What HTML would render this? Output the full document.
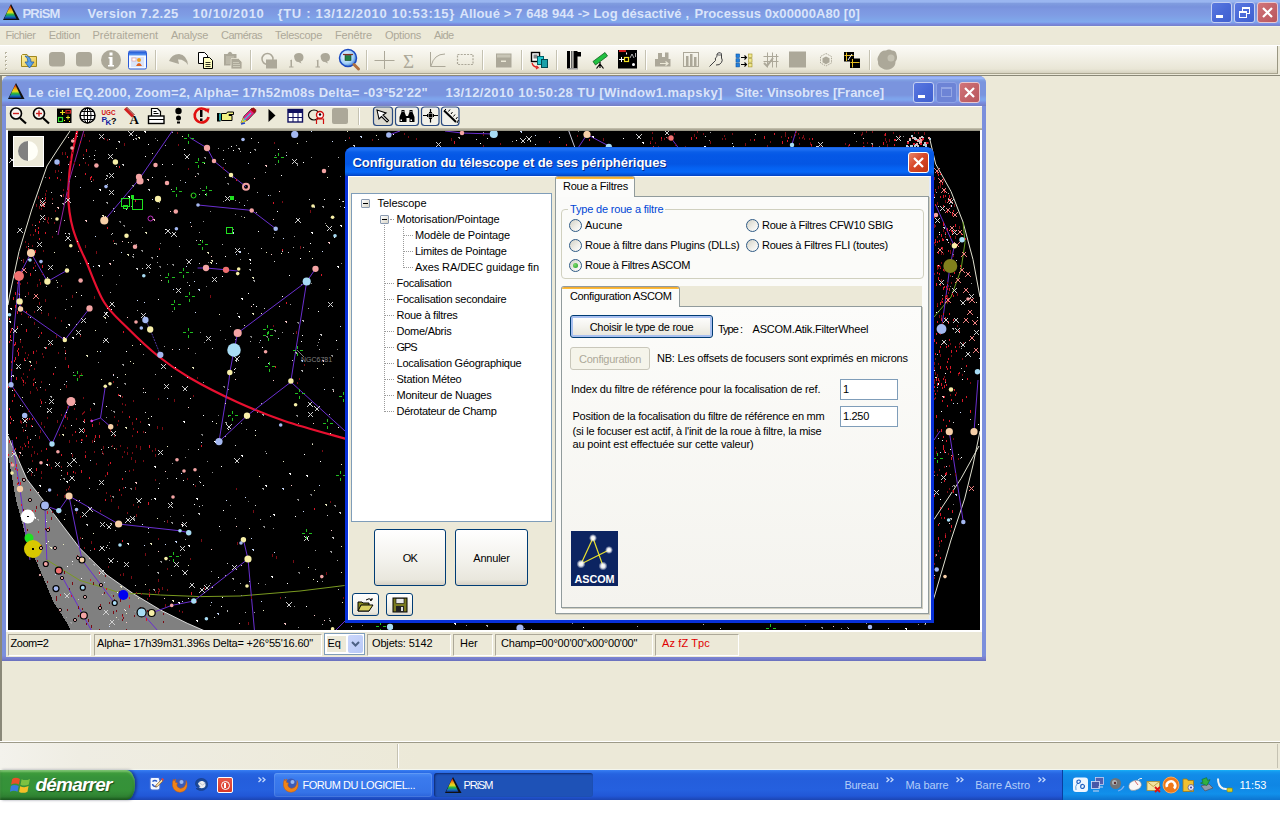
<!DOCTYPE html>
<html lang="fr"><head><meta charset="utf-8"><title>PRiSM</title>
<style>
*{box-sizing:border-box;margin:0;padding:0}
html,body{width:1280px;height:822px;overflow:hidden;background:#fff}
body{position:relative;font-family:"Liberation Sans",sans-serif;font-size:11px;color:#000}
.a{position:absolute}
.t{position:absolute;white-space:nowrap;line-height:14px}
#desk{left:0;top:0;width:1280px;height:800px;background:#ece9d8}
/* main title */
#mt{left:0;top:0;width:1280px;height:26px;background:linear-gradient(#9ab6f0 0,#9ab6f0 2px,#809cdf 3.5px,#7892dc 7px,#7c96e0 9px,#7f9ce4 15px,#7fa4e8 19px,#80a9ee 22px,#7a8ae0 24px,#7580c8 26px)}
.tt{font-weight:bold;font-size:13px;color:#d9e4fa;line-height:16px;white-space:pre;position:absolute}
.cb{position:absolute;width:21px;height:21px;border-radius:3px;border:1px solid #c5d0f2;background:linear-gradient(135deg,#5a78e0,#4a6ad8 50%,#4060cf)}
.cb.x{background:linear-gradient(135deg,#d2757a,#c4646a 50%,#b9565c);border-color:#e8c8d0}
/* menu */
#menu{left:0;top:26px;width:1280px;height:20px;background:#ece9d8;border-top:1px solid #f0f4e6}
#menu span{position:absolute;top:1px;color:#aca899;font-size:11px;line-height:14px;white-space:nowrap}
#tb{left:0;top:46px;width:1278px;height:28px;background:linear-gradient(#fbfaf6,#f3f1e7 40%,#e9e6d6 85%,#d6d2c0);border-bottom:1px solid #a9a590;border-right:1px solid #9a9782}
/* mdi area */
#mdi{left:0;top:75px;width:1280px;height:666px;background:#ece9d8;border-left:2px solid #8a8878;border-top:1px solid #8a8878}
/* child */
#ch{left:2px;top:76px;width:984px;height:585px;background:#7b8fdc;border-radius:7px 7px 0 0}
#cht{left:0;top:0;width:984px;height:30px;border-radius:7px 7px 0 0;background:linear-gradient(#7b8fe0 0,#98b4f8 1px,#98b4f8 2.5px,#80a0e2 4px,#7a94de 6px,#7a94de 19px,#7ea2ea 22px,#7ea6ee 24px,#7a8ee0 26.5px,#7580c8 29.5px)}
#chc{left:4px;top:30px;width:976px;height:551px;background:#ece9d8}
#sky{left:2px;top:25px;width:972px;height:499px;background:#000;overflow:hidden}
.sp{position:absolute;top:528px;height:22px;border:1px solid;border-color:#aca899 #fff #fff #aca899;font-size:11px;line-height:14px;padding:1px 0 0 3px;white-space:nowrap;overflow:hidden}
/* dialog */
#dlg{left:345px;top:147px;width:589px;height:476px;border-radius:8px 8px 0 0;background:#0831d9}
#dlgt{left:0;top:0;width:589px;height:29px;border-radius:8px 8px 0 0;background:linear-gradient(#0a50d8 0,#2272f4 1px,#1a6cf0 3px,#0a5ee8 5px,#0558e6 8px,#0456e4 17px,#0562f2 21px,#0668f8 25px,#0452d8 27.5px,#0340c0 29px)}
#dlgc{left:3px;top:29px;width:583px;height:444px;background:#ece9d8;border-left:1px solid #fff;border-top:1px solid #fff;border-right:2px solid #e2eafa;border-bottom:1px solid #e2eafa}
.btn{position:absolute;border:1px solid #003c74;border-radius:3px;background:linear-gradient(#fff,#f4f3ee 50%,#e9e7dd 90%,#d6d0c5);text-align:center;font-size:11px;white-space:nowrap}
.rad{position:absolute;width:13px;height:13px;border-radius:50%;border:1px solid #2f5a85;background:linear-gradient(135deg,#d2d1c6,#efeee8 55%,#fff)}
.tr{position:absolute;white-space:nowrap;line-height:14px;font-size:11px}
.tbx{position:absolute;width:9px;height:9px;border:1px solid #8a9ab0;border-radius:1px;background:linear-gradient(135deg,#fff,#d8d4c6)}
.tbx:after{content:"";position:absolute;left:1px;top:3px;width:5px;height:1px;background:#000}
.dh{position:absolute;height:0;border-top:1px dotted #9a9a9a}
.dv{position:absolute;width:0;border-left:1px dotted #9a9a9a}
/* bottom */
#sb{left:0;top:743px;width:1280px;height:27px;background:linear-gradient(90deg,#f3f2ec 0,#efede3 80px,#ece9d8 420px);border-bottom:1px solid #f4f6ee}
#tk{left:0;top:770px;width:1280px;height:30px;background:linear-gradient(#3a80f3 0,#2c6fe9 2px,#2663e0 4px,#245edc 9px,#2560df 20px,#2157d7 26px,#1b45b3 30px)}
#st{left:0;top:0;width:135px;height:30px;border-radius:0 9px 9px 0/0 14px 14px 0;background:linear-gradient(#5eac56 0,#3c9b3a 3px,#36923a 8px,#359238 20px,#2f8232 27px,#266b2a 30px);box-shadow:2px 0 3px rgba(0,0,40,.4),inset 0 2px 2px rgba(190,240,170,.35),inset 0 -2px 3px rgba(0,40,0,.3)}
#tray{left:1062px;top:0;width:218px;height:30px;border-left:1px solid #0a3fa0;background:linear-gradient(#19b0f5 0,#1497ee 2px,#118be8 5px,#0f86e4 15px,#1190eb 24px,#0d74cf 30px)}
.tkb{position:absolute;top:3px;height:24px;border-radius:3px;color:#fff;font-size:11px;line-height:14px;white-space:nowrap}
</style></head><body>
<div class="a" id="desk"></div>
<!-- main title bar -->
<div class="a" id="mt">
 <svg class="a" style="left:2px;top:3px" width="18" height="18" viewBox="0 0 18 18"><defs><linearGradient id="pg" x1="0" y1="0" x2="0" y2="1"><stop offset="0" stop-color="#e01010"/><stop offset=".3" stop-color="#f0a010"/><stop offset=".5" stop-color="#e8e020"/><stop offset=".68" stop-color="#20b040"/><stop offset=".85" stop-color="#1070c0"/><stop offset="1" stop-color="#102070"/></linearGradient></defs><path d="M9 1 L17.5 17 L1 17 Z" fill="#111"/><path d="M8.3 2.5 L14.5 16 L2 16 Z" fill="url(#pg)"/></svg>
 <span class="tt" style="letter-spacing:-0.834px;left:22.5px;top:6px">PRiSM</span>
 <span class="tt" style="letter-spacing:0.305px;left:87.5px;top:6px">Version 7.2.25</span>
 <span class="tt" style="letter-spacing:0.692px;left:192.5px;top:6px">10/10/2010</span>
 <span class="tt" style="letter-spacing:0.684px;left:277.5px;top:6px">{TU : 13/12/2010 10:53:15}</span>
 <span class="tt" style="letter-spacing:0.110px;left:459.6px;top:6px">Alloué &gt; 7 648 944 -&gt; Log désactivé ,</span>
 <span class="tt" style="letter-spacing:0.094px;left:694.4px;top:6px">Processus 0x00000A80 [0]</span>
 <div class="cb" style="left:1211px;top:2px"><i class="a" style="left:4px;top:12px;width:7px;height:3px;background:#fff"></i></div>
 <div class="cb" style="left:1234px;top:2px"><i class="a" style="left:7px;top:4px;width:8px;height:7px;border:1px solid #fff;border-top-width:2px"></i><i class="a" style="left:4px;top:8px;width:8px;height:7px;border:1px solid #fff;border-top-width:2px;background:#4d6cd9"></i></div>
 <div class="cb x" style="left:1257px;top:2px"><svg class="a" style="left:0;top:0" width="19" height="19"><path d="M5 5 L14 14 M14 5 L5 14" stroke="#fff" stroke-width="2.2"/></svg></div>
</div>
<!-- menu -->
<div class="a" id="menu">
 <span style="letter-spacing:-0.431px;left:5.5px">Fichier</span><span style="letter-spacing:-0.342px;left:48.75px">Edition</span><span style="letter-spacing:-0.041px;left:92.5px">Prétraitement</span><span style="letter-spacing:-0.306px;left:171px">Analyse</span><span style="letter-spacing:-0.518px;left:221px">Caméras</span><span style="letter-spacing:-0.283px;left:275px">Telescope</span><span style="letter-spacing:-0.132px;left:335px">Fenêtre</span><span style="letter-spacing:-0.275px;left:385px">Options</span><span style="letter-spacing:-0.633px;left:434px">Aide</span>
</div>
<div class="a" style="left:0;top:45px;width:1280px;height:1px;background:#fff"></div>
<div class="a" id="tb"><svg class="a" style="left:0;top:0" width="1278" height="28" viewBox="0 46 1278 28">
<defs><linearGradient id="fg" x1="0" y1="0" x2="1" y2="1"><stop offset="0" stop-color="#fff8b0"/><stop offset="1" stop-color="#e8c040"/></linearGradient><linearGradient id="wg" x1="0" y1="0" x2="0" y2="1"><stop offset="0" stop-color="#1a50d0"/><stop offset="1" stop-color="#60a0f8"/></linearGradient><radialGradient id="mg" cx=".4" cy=".4" r=".7"><stop offset="0" stop-color="#fff"/><stop offset=".6" stop-color="#a0d0f8"/><stop offset="1" stop-color="#2060c8"/></radialGradient></defs>
<rect x="5" y="52" width="2" height="2" fill="#b8b4a0"/><rect x="6" y="53" width="1" height="1" fill="#fff"/>
<rect x="5" y="56" width="2" height="2" fill="#b8b4a0"/><rect x="6" y="57" width="1" height="1" fill="#fff"/>
<rect x="5" y="60" width="2" height="2" fill="#b8b4a0"/><rect x="6" y="61" width="1" height="1" fill="#fff"/>
<rect x="5" y="64" width="2" height="2" fill="#b8b4a0"/><rect x="6" y="65" width="1" height="1" fill="#fff"/>
<rect x="5" y="68" width="2" height="2" fill="#b8b4a0"/><rect x="6" y="69" width="1" height="1" fill="#fff"/>
<path d="M155.5 50v20" stroke="#c5c2b2"/><path d="M156.5 50v20" stroke="#fff"/>
<path d="M250.5 50v20" stroke="#c5c2b2"/><path d="M251.5 50v20" stroke="#fff"/>
<path d="M366.5 50v20" stroke="#c5c2b2"/><path d="M367.5 50v20" stroke="#fff"/>
<path d="M482.5 50v20" stroke="#c5c2b2"/><path d="M483.5 50v20" stroke="#fff"/>
<path d="M521.5 50v20" stroke="#c5c2b2"/><path d="M522.5 50v20" stroke="#fff"/>
<path d="M556.5 50v20" stroke="#c5c2b2"/><path d="M557.5 50v20" stroke="#fff"/>
<path d="M645.5 50v20" stroke="#c5c2b2"/><path d="M646.5 50v20" stroke="#fff"/>
<path d="M869.5 50v20" stroke="#c5c2b2"/><path d="M870.5 50v20" stroke="#fff"/>
<path d="M21.5 55.5 L21.5 66.5 L36.5 66.5 L36.5 56.5 L28.5 56.5 L27 54.5 L22.5 54.5 Z" fill="url(#fg)" stroke="#a08820"/><path d="M25 56 Q31 56 31 62 L34 62 L29.5 68 L25 62 L28 62 Q28 58 25 56Z" fill="#58a0e8" stroke="#2860a8" stroke-width=".8"/>
<rect x="49" y="52" width="16" height="14.5" rx="3.5" fill="#aca899"/><rect x="76" y="52" width="16" height="14.5" rx="3.5" fill="#aca899"/>
<circle cx="111" cy="60" r="10" fill="#aca899"/><rect x="109.5" y="57" width="3" height="9" fill="#fff"/><rect x="109.5" y="52.5" width="3" height="3" fill="#fff"/><rect x="108.5" y="57" width="2" height="1.5" fill="#fff"/><rect x="108" y="65" width="6" height="1.5" fill="#fff"/>
<rect x="128.500" y="51" width="18" height="18" rx="1.5" fill="#f4f8ff" stroke="#2a5ad8"/><rect x="129" y="51.500" width="17" height="4" fill="url(#wg)"/><rect x="131" y="57" width="13" height="10" fill="#d8e4fa"/><circle cx="139" cy="60" r="2" fill="#f0a020"/><path d="M136 66 Q139 60 142 66Z" fill="#e06020"/><rect x="132" y="58" width="4" height="3" fill="#fff" stroke="#e08080" stroke-width=".5"/>
<path d="M169 61 Q172 54 179 54 Q187 55 188 65 Q184 59 178 59.5 L179 64 Z" fill="#aca899"/>
<path d="M198.500 52.500h6l3 3v8h-9z" fill="#fff" stroke="#000"/><path d="M203.500 57.500h6l3 3v8h-9z" fill="#ffffc0" stroke="#000"/><path d="M205.500 62.500h5M205.500 64.500h5M205.500 66.500h5" stroke="#000" stroke-width=".8"/>
<path d="M224 54 h3.500 q2.500 -4.500 5 0 h4 v11.500 h-12.500z" fill="#aca899"/><path d="M231 58.500 h7.500 l3.500 3.500 v7 h-11z" fill="#aca899" stroke="#ece9d8" stroke-width=".8"/><path d="M226 57h8M226 59h4M226 61h4M226 63h4M233 62.500h6M233 64.500h7M233 66.500h7" stroke="#d8d5c6" stroke-width=".7"/>
<circle cx="267.500" cy="59" r="5.500" fill="none" stroke="#aca899" stroke-width="1.500"/><rect x="266" y="59.500" width="11" height="9" fill="#aca899"/>
<path d="M290 60.500 l2 -1 v7 h1.500 v1 h-4.500 v-1 h1.500 v-5z" fill="#aca899"/><path d="M294 56 q1 -3 5 -3 q4 0 4.500 4 q0 4 -3 4.500 l1 2 l-3 -1.500 q-4 0 -4.500 -6z" fill="#aca899"/>
<path d="M316.5 60.500 l2 -1 v7 h1.500 v1 h-4.500 v-1 h1.500 v-5z" fill="#aca899"/><path d="M320.5 56 q1 -3 5 -3 q4 0 4.500 4 q0 4 -3 4.500 l1 2 l-3 -1.500 q-4 0 -4.500 -6z" fill="#aca899"/>
<circle cx="348" cy="58" r="8.500" fill="url(#mg)" stroke="#1848c0" stroke-width="1.500"/><path d="M354 64.500l4.500 4.500" stroke="#b07040" stroke-width="3" stroke-linecap="round"/><rect x="345" y="55.500" width="6" height="5" fill="#208040" stroke="#104020" stroke-width=".6"/><path d="M343 54.500h10" stroke="#803020" stroke-width="1.200"/>
<path d="M374.500 60.500h20M384.500 51v18" stroke="#aca899" stroke-width="1"/>
<text x="403" y="67.500" font-family="Liberation Serif,serif" font-size="19" fill="#aca899">Σ</text>
<path d="M430.500 52v14.500h15" stroke="#aca899" fill="none"/><path d="M431 66 Q434 54 445 54" stroke="#aca899" fill="none"/>
<rect x="457.500" y="54.500" width="15.500" height="10" fill="none" stroke="#aca899" stroke-width="1.200" stroke-dasharray="2 1.200"/>
<rect x="496" y="53.500" width="15.500" height="14" fill="#aca899"/><rect x="497" y="54.500" width="13.500" height="3" fill="#c8c5b6"/><rect x="501" y="60.500" width="5" height="1.500" fill="#ece9d8"/>
<rect x="531.500" y="52.500" width="8" height="9" fill="#fff" stroke="#000" stroke-width="1.400"/><rect x="533.500" y="54.500" width="4" height="4" fill="#888"/><rect x="537.500" y="56.500" width="6" height="8" fill="#20c8d0" stroke="#006068"/><rect x="541.500" y="59.500" width="6" height="8" fill="#18a0a8" stroke="#004850"/><path d="M532 63 q1 4 6 4.500 l-1.500 -1.500 m1.500 1.500 l-2 1.500" stroke="#e02020" fill="none" stroke-width="1.200"/>
<rect x="567" y="51" width="3" height="17.500" fill="#000"/><rect x="571" y="51" width="1.500" height="17.500" fill="#666"/><rect x="573.500" y="51" width="4" height="17.500" fill="#000"/><rect x="577" y="52" width="4" height="4.500" fill="#000"/><rect x="568" y="68" width="10" height="1.500" fill="#999"/>
<path d="M593 61.500 L605 52.500 L607.500 56 L595.500 65 Z" fill="#20c040" stroke="#106020" stroke-width=".8"/><path d="M600 62v6M600 64l-3.500 4.500M600 64l3.500 4.500" stroke="#000" stroke-width="1.200"/>
<rect x="618" y="50" width="19" height="18.500" fill="#000"/><rect x="619" y="50" width="7" height="2" fill="#d02020"/><rect x="624.500" y="57.500" width="4" height="4" fill="none" stroke="#f0e020" stroke-width="1.200"/><path d="M619 59.500h5M621.500 57v5" stroke="#fff"/><path d="M630 58 l2 -4 l2 4 M635.500 53v4" stroke="#ddd" stroke-width=".8" fill="none"/><circle cx="633.500" cy="64.500" r="1.500" fill="#fff"/><path d="M626.500 52.500l.1 2" stroke="#fff"/>
<path d="M655 59 h3 v-6 h4 v4 h3 v-4.500 h3.500 v6.500 h2 v7.500 h-15.500z" fill="#aca899"/><path d="M660 63.500h8m-2.500 -2l2.500 2l-2.500 2" stroke="#ece9d8" fill="none" stroke-width="1.200"/>
<rect x="683.500" y="52.500" width="15" height="14" fill="none" stroke="#aca899"/><rect x="686" y="56" width="2.500" height="10" fill="#aca899"/><rect x="690" y="54" width="2.500" height="12" fill="#aca899"/><rect x="694" y="57" width="2.500" height="9" fill="#aca899"/>
<path d="M709.500 66.500 l6 -6 q-1 -3 1.500 -4 l0 -2.500 q2.500 -2.500 4.500 0 l0 4 q1.500 2 0 4.500 q-2 3 -5.500 2.500" stroke="#404040" fill="none" stroke-width="1"/><ellipse cx="719.500" cy="54" rx="2.200" ry="1.300" fill="#c8c8c8" stroke="#404040" stroke-width=".6"/>
<rect x="736" y="54" width="3.500" height="3.500" fill="#2080e0" stroke="#0850a0" stroke-width=".6"/><rect x="748.500" y="54" width="3.500" height="3.500" fill="#f0e890" stroke="#a09020" stroke-width=".6"/>
<rect x="736" y="58.7" width="3.500" height="3.500" fill="#2080e0" stroke="#0850a0" stroke-width=".6"/><rect x="748.500" y="58.7" width="3.500" height="3.500" fill="#f0e890" stroke="#a09020" stroke-width=".6"/>
<rect x="736" y="63.4" width="3.500" height="3.500" fill="#2080e0" stroke="#0850a0" stroke-width=".6"/><rect x="748.500" y="63.4" width="3.500" height="3.500" fill="#f0e890" stroke="#a09020" stroke-width=".6"/>
<path d="M741 57.500h5.500m-2 -2l2 2l-2 2M741 64.500h5.500m-2 -2l2 2l-2 2" stroke="#000" fill="none" stroke-width="1.100"/>
<path d="M763.500 56.500h15M763.500 61.500h15M767.500 52.500v15M772.500 52.500v15M776.500 54v13.500" stroke="#aca899" fill="none"/><path d="M764 63 l3 3 l6 -8" stroke="#aca899" stroke-width="2" fill="none"/>
<rect x="789" y="51.500" width="17" height="16" fill="#aca899"/>
<path d="M826 53.500 l5.500 3 v6.500 l-5.500 3 l-5.500 -3 v-6.500z" fill="none" stroke="#aca899" stroke-dasharray="1.500 1"/><path d="M826 56.500 l3.500 1.800 v4 l-3.500 2 l-3.500 -2 v-4z" fill="#aca899"/>
<rect x="844" y="52" width="10" height="9.500" fill="#000"/><rect x="850" y="58.500" width="10" height="9.500" fill="#000"/><path d="M846.500 52.500v8.500M844.500 55.500h9M852.500 59v8.500M850.500 62.500h9" stroke="#e8c020" stroke-width="1"/><path d="M848 60 l4 -6" stroke="#fff" stroke-width="1"/>
<path d="M879 55 q2 -5 7 -4.500 q3 -2 6 0 q4 0 4.500 4 q1.500 4 -1 7 q0 5 -4 7 q-5 2.500 -9 0 q-5 -2 -4.500 -7 q-1.500 -3 1 -6.500z" fill="#aca899"/><circle cx="891" cy="58" r="3.500" fill="#c4c1b2"/>
</svg></div>
<div class="a" id="mdi"></div>
<div class="a" id="ch">
 <div class="a" id="cht">
  <svg class="a" style="left:5px;top:6px" width="18" height="18" viewBox="0 0 18 18"><path d="M9 1 L17.5 17 L1 17 Z" fill="#111"/><path d="M8.3 2.5 L14.5 16 L2 16 Z" fill="url(#pg)"/></svg>
  <span class="tt" id="ct1" style="letter-spacing:0.241px;left:26px;top:9px">Le ciel EQ.2000, Zoom=2, Alpha= 17h52m08s Delta= -03°52'22"</span>
  <span class="tt" id="ct2" style="letter-spacing:0.372px;left:443.4px;top:9px">13/12/2010 10:50:28 TU [Window1.mapsky]</span>
  <span class="tt" id="ct3" style="letter-spacing:-0.026px;left:733.3px;top:9px">Site: Vinsobres [France]</span>
  <div class="cb" style="left:911px;top:6px"><i class="a" style="left:4px;top:12px;width:7px;height:3px;background:#fff"></i></div>
  <div class="cb" style="left:934px;top:6px;background:#6d84d6;border-color:#8da2e6"><i class="a" style="left:4px;top:4px;width:11px;height:10px;border:1px solid #93a6e4;border-top-width:2px"></i></div>
  <div class="cb x" style="left:957px;top:6px"><svg class="a" style="left:0;top:0" width="19" height="19"><path d="M5 5 L14 14 M14 5 L5 14" stroke="#fff" stroke-width="2.2"/></svg></div>
 </div>
 <div class="a" style="left:0;top:580px;width:984px;height:5px;background:linear-gradient(#7f8ad8,#757ccb 60%,#6a70bc)"></div>
 <div class="a" id="chc">
  <div class="a" style="left:0;top:0;width:976px;height:1px;background:#fff"></div><div class="a" id="ctb" style="left:0;top:0;width:976px;height:23px"><svg class="a" style="left:0;top:0" width="976" height="23" viewBox="6 106 976 23">
<circle cx="16" cy="113.500" r="5.500" fill="#f8f4f0" stroke="#000" stroke-width="1.600"/><path d="M20 118 l6 5.500" stroke="#000" stroke-width="2.200"/><path d="M13 113.500h6" stroke="#d02020" stroke-width="1.400"/>
<circle cx="39" cy="113.500" r="5.500" fill="#f8f4f0" stroke="#000" stroke-width="1.600"/><path d="M43 118 l6 5.500" stroke="#000" stroke-width="2.200"/><path d="M36 113.500h6" stroke="#d02020" stroke-width="1.400"/>
<path d="M39 110.500v6" stroke="#d02020" stroke-width="1.400"/>
<rect x="57" y="108.500" width="14.500" height="14.500" fill="#000"/><path d="M60 112.500h5M62.500 110v5" stroke="#e8e020" stroke-width="1.200"/><rect x="66" y="110.500" width="4.500" height="2.500" fill="none" stroke="#d02020" stroke-width="1.200"/><rect x="58.500" y="117.500" width="4" height="4" fill="none" stroke="#30e030" stroke-width="1.200"/><path d="M66 117.500h4M68 115.500v4" stroke="#e8e020" stroke-width="1"/><rect x="64" y="120" width="1" height="1" fill="#ff0"/><rect x="69" y="121" width="1" height="1" fill="#ff0"/>
<circle cx="87.500" cy="115.500" r="7.500" fill="#fff" stroke="#000" stroke-width="1.500"/><ellipse cx="87.500" cy="115.500" rx="3.500" ry="7.500" fill="none" stroke="#000"/><path d="M80 115.500h15M87.500 108v15M81.500 111.500h12M81.500 119.500h12" stroke="#000" fill="none"/>
<text x="101.500" y="114.500" font-family="Liberation Sans,sans-serif" font-weight="bold" font-size="8" fill="#d01010" textLength="14" lengthAdjust="spacingAndGlyphs">UGC</text><text x="101.500" y="122" font-family="Liberation Sans,sans-serif" font-weight="bold" font-size="8" fill="#1020a0">P</text><text x="105.500" y="124.500" font-family="Liberation Sans,sans-serif" font-weight="bold" font-size="8" fill="#1020a0">K</text><text x="111" y="124" font-family="Liberation Sans,sans-serif" font-weight="bold" font-size="9" fill="#000">?</text>
<path d="M125 108.500 l8 8" stroke="#d02020" stroke-width="3"/><path d="M125 108.500 l8 8" stroke="#701010" stroke-width="1" transform="translate(1.500,-1.500)"/><text x="129.500" y="124" font-family="Liberation Serif,serif" font-weight="bold" font-size="13" fill="#000">A</text>
<path d="M151.500 116 v-7.500 h6 l3 3 v4.500" fill="#fff" stroke="#000" stroke-width="1.200"/><rect x="148.500" y="116" width="15.500" height="7.500" fill="#fff" stroke="#000" stroke-width="1.400"/><path d="M149 119.500h15M153.500 111.500h3M153.500 113.500h5" stroke="#000" stroke-width="1"/>
<circle cx="178.500" cy="111" r="3.200" fill="#000"/><circle cx="178.500" cy="118" r="2.500" fill="#000"/><rect x="177" y="121.500" width="3" height="2" fill="#000"/>
<path d="M207 111 A7 7 0 1 0 208.500 117" fill="none" stroke="#e01010" stroke-width="2.600"/><path d="M204 108.500l5.500 0 l-1 5z" fill="#e01010"/><rect x="200" y="110" width="2.500" height="7" fill="#000"/><rect x="200" y="118.500" width="2.500" height="2.500" fill="#000"/>
<rect x="217" y="113" width="3.500" height="8.500" fill="#000"/><rect x="219" y="113.500" width="2" height="7" fill="#20a0a0"/><path d="M221.500 113.500 h5 l1 -1.500 h6 v2.500 h-4.500 v1 h3 v5 h-10.500z" fill="#f0f080" stroke="#000" stroke-width="1"/>
<path d="M241 123 l3 -7 l8 -8 l4 3.500 l-8 8.500z" fill="#e82080" stroke="#404040" stroke-width=".8"/><path d="M250 109.500 l3.500 -2 l3 2.500 l-2 3.500z" fill="#a01010"/><path d="M241 123 l2 -5 l3.500 3z" fill="#f0e020"/><path d="M243 121 l8 -8" stroke="#40c0e0" stroke-width="1.200"/><path d="M241 124 l4 -1" stroke="#2040c0" stroke-width="1.500"/>
<path d="M268.500 109 l7 6.500 l-7 6.500z" fill="#000"/>
<rect x="288" y="109.500" width="14.500" height="12.500" fill="#fff" stroke="#101060" stroke-width="1.400"/><rect x="288" y="109.500" width="14.500" height="3.500" fill="#101060"/><path d="M293 113v9M298 113v9M288 117.500h14.500" stroke="#101060" stroke-width="1"/>
<ellipse cx="314" cy="115" rx="5.500" ry="5" fill="none" stroke="#000" stroke-width="1.200"/><circle cx="320" cy="115" r="3.500" fill="#fff" stroke="#d01010" stroke-width="1.400"/><path d="M316.500 124v-5h7v5M320 119v-1.500" stroke="#d01010" fill="none" stroke-width="1.200"/><circle cx="320" cy="114.500" r="1.200" fill="#000"/>
<rect x="332" y="108" width="16" height="16" rx="2" fill="#aca899"/>
<path d="M358.500 108v17" stroke="#c5c2b2"/><path d="M359.500 108v17" stroke="#fff"/>
<rect x="373.5" y="107" width="19" height="18.500" rx="3" fill="#dcdad0" stroke="#2a4a80" stroke-width="1.200"/>
<rect x="395.5" y="107" width="23" height="18.500" rx="3" fill="#f2f1ea" stroke="#2a4a80" stroke-width="1.200"/>
<rect x="421.5" y="107" width="17.5" height="18.500" rx="3" fill="#f2f1ea" stroke="#2a4a80" stroke-width="1.200"/>
<rect x="441.5" y="107" width="17.5" height="18.500" rx="3" fill="#f2f1ea" stroke="#2a4a80" stroke-width="1.200"/>
<path d="M377 110 l2 9 l2.500 -2.500 l5.500 5.500 l1.500 -1.500 l-5.500 -5.500 l3 -2z" fill="#fff" stroke="#000" stroke-width="1.100"/>
<path d="M399.500 122 v-5 l2 -5 v-2 h3 v2 l1.500 4 h2 l1.500 -4 v-2 h3 v2 l2 5 v5 h-5 v-4 h-3 v4z" fill="#000"/><rect x="400.500" y="119.500" width="1.500" height="1.500" fill="#fff"/><rect x="410.500" y="119.500" width="1.500" height="1.500" fill="#fff"/><rect x="402.500" y="111" width="1" height="1" fill="#fff"/><rect x="410.500" y="111" width="1" height="1" fill="#fff"/>
<path d="M423 115.500h5M433 115.500h5M430.500 109v4M430.500 118v4.500" stroke="#000" stroke-width="1.200"/><rect x="428.500" y="113.500" width="4" height="4" fill="#000"/><path d="M427.500 114v3M433.500 114v3M429 112.500h3M429 118.500h3" stroke="#000" stroke-width="1"/>
<path d="M444 110.500 l12 11.500" stroke="#000" stroke-width="2"/><path d="M446 109 l-2 2M448.500 111.500 l1.500 -2 M451 114 l1.500 -2M453.500 116.500l1.500 -2M456 119l1.500 -2M457 123 l1.500 -3" stroke="#000" stroke-width="1"/>
</svg></div>
  <div class="a" style="left:0;top:22px;width:976px;height:3px;background:linear-gradient(#c9c5b2,#8f8c7c)"></div>
  <div class="a" style="left:0;top:24px;width:2px;height:502px;background:#fff"></div>
  <div class="a" style="left:974px;top:24px;width:2px;height:502px;background:#fff"></div>
  <div class="a" style="left:0;top:524px;width:976px;height:2px;background:#fff"></div>
  <div class="a" id="sky"><svg class="a" style="left:0;top:0" width="972" height="499" viewBox="8 131 972 499" shape-rendering="crispEdges">
<polygon points="8.0,436.0 26.8,479.0 53.5,513.6 80.0,548.4 107.0,575.0 133.8,594.0 160.5,610.0 187.3,623.3 205.0,631.0 71.0,631.0 67.0,623.0 53.5,602.0 40.0,570.0 26.8,540.4 16.0,500.0 8.0,455.0" fill="#808080"/>
<polyline points="8.0,436.0 26.8,479.0 53.5,513.6 80.0,548.4 107.0,575.0 133.8,594.0 160.5,610.0 187.3,623.3 205.0,631.0" fill="none" stroke="#d8d8d8" stroke-width="1" shape-rendering="auto"/>
<polyline points="70.0,131.0 58.0,149.0 47.0,166.0 31.6,210.0 19.0,251.5 9.5,296.0 8.0,305.0" fill="none" stroke="#e0e0d0" stroke-width="1" shape-rendering="auto"/>
<polyline points="930.0,140.0 935.7,164.0 951.0,191.4 963.0,222.0 973.0,259.5 980.0,297.0" fill="none" stroke="#e0e0d0" stroke-width="1" shape-rendering="auto"/>
<polyline points="980.0,431.0 973.0,465.0 964.6,499.0 951.0,540.0 934.0,597.7 925.0,625.0" fill="none" stroke="#e0e0d0" stroke-width="1" shape-rendering="auto"/>
<polyline points="979.0,446.0 961.0,478.6 934.0,519.5" fill="none" stroke="#e0e0d0" stroke-width="1" shape-rendering="auto"/>
<polyline points="45.5,559.0 80.0,580.5 107.0,588.6 123.0,594.0 139.0,593.5 160.5,595.0 200.7,596.6 240.0,596.0 300.0,591.0 344.6,585.5" fill="none" stroke="#7a9a20" stroke-width="1" shape-rendering="auto"/>
<polyline points="934.0,317.0 951.0,297.0 961.0,269.7 965.0,242.4 963.0,222.0" fill="none" stroke="#6aa020" stroke-width="1" shape-rendering="auto"/>
<path d="M77.4 130.0C76.5 134.2 73.3 147.7 72.0 155.0C70.7 162.3 69.9 167.3 69.3 174.0C68.7 180.7 68.3 188.7 68.3 195.0C68.3 201.3 68.7 206.3 69.5 212.0C70.3 217.7 71.3 223.2 73.0 229.0C74.7 234.8 77.4 241.7 79.6 247.0C81.8 252.3 81.9 251.8 86.0 261.0C90.1 270.2 97.2 291.0 104.0 302.0C110.8 313.0 117.5 318.0 126.5 327.0C135.5 336.0 147.4 347.5 158.0 356.0C168.6 364.5 176.8 370.3 190.0 378.0C203.2 385.7 221.2 394.8 237.0 402.0C252.8 409.2 266.3 414.8 284.5 421.0C302.7 427.2 335.8 436.0 346.0 439.0" fill="none" stroke="#e81030" stroke-width="2.2" shape-rendering="auto"/>
<polyline points="84.0,130.0 70.0,178.0 58.0,235.0" fill="none" stroke="#9020a0" stroke-width="1" shape-rendering="auto"/>
<polyline points="104.3,220.5 139.0,179.4 172.3,131.0" fill="none" stroke="#6a2fd0" stroke-width="1" shape-rendering="auto"/>
<polyline points="189.7,137.6 207.0,148.0 214.0,161.0 231.0,175.0 246.0,186.7" fill="none" stroke="#6a2fd0" stroke-width="1" shape-rendering="auto"/>
<polyline points="198.0,205.0 251.7,210.4 275.7,228.7" fill="none" stroke="#6a2fd0" stroke-width="1" shape-rendering="auto"/>
<polyline points="197.6,268.0 206.0,268.0 226.0,269.8 237.7,271.0" fill="none" stroke="#6a2fd0" stroke-width="1" shape-rendering="auto"/>
<polyline points="31.0,253.0 47.4,281.5 67.0,270.4" fill="none" stroke="#6a2fd0" stroke-width="1" shape-rendering="auto"/>
<polyline points="31.0,253.0 19.0,276.0 19.6,301.4 20.5,309.0 64.8,340.0 89.5,308.4" fill="none" stroke="#6a2fd0" stroke-width="1" shape-rendering="auto"/>
<polyline points="19.0,276.0 14.0,330.0 11.0,385.0" fill="none" stroke="#6a2fd0" stroke-width="1" shape-rendering="auto"/>
<polyline points="315.5,268.8 306.7,281.5 237.7,333.0 234.0,350.0 229.8,372.5 229.0,380.0 219.0,441.6 247.0,415.7 290.9,382.0 345.0,431.0" fill="none" stroke="#6a2fd0" stroke-width="1" shape-rendering="auto"/>
<polyline points="306.7,281.5 290.9,381.0" fill="none" stroke="#6a2fd0" stroke-width="1" shape-rendering="auto"/>
<polyline points="11.0,384.7 52.0,444.0 71.0,401.5" fill="none" stroke="#6a2fd0" stroke-width="1" shape-rendering="auto"/>
<polyline points="105.3,386.3 100.5,418.0 110.7,426.8" fill="none" stroke="#6a2fd0" stroke-width="1" shape-rendering="auto"/>
<polyline points="91.7,421.0 100.5,418.0" fill="none" stroke="#6a2fd0" stroke-width="1" shape-rendering="auto"/>
<polyline points="45.0,505.5 58.8,510.6 69.0,496.0 118.6,524.0 180.0,530.8 188.7,532.7" fill="none" stroke="#6a2fd0" stroke-width="1" shape-rendering="auto"/>
<polyline points="45.0,505.5 46.8,560.0" fill="none" stroke="#6a2fd0" stroke-width="1" shape-rendering="auto"/>
<polyline points="69.0,496.0 82.0,560.0 114.7,603.0" fill="none" stroke="#6a2fd0" stroke-width="1" shape-rendering="auto"/>
<polyline points="58.8,570.6 91.7,631.0" fill="none" stroke="#6a2fd0" stroke-width="1" shape-rendering="auto"/>
<polyline points="243.4,539.7 248.0,559.0 254.5,631.0" fill="none" stroke="#6a2fd0" stroke-width="1" shape-rendering="auto"/>
<polyline points="248.0,559.0 193.8,601.0 171.7,605.4 151.7,613.0" fill="none" stroke="#6a2fd0" stroke-width="1" shape-rendering="auto"/>
<polyline points="141.6,612.4 158.0,631.0" fill="none" stroke="#6a2fd0" stroke-width="1" shape-rendering="auto"/>
<polyline points="335.0,631.0 346.0,620.0" fill="none" stroke="#6a2fd0" stroke-width="1" shape-rendering="auto"/>
<polyline points="20.0,489.0 24.0,520.0 30.0,560.0" fill="none" stroke="#6a2fd0" stroke-width="1" shape-rendering="auto"/>
<polyline points="12.0,440.0 20.0,489.0" fill="none" stroke="#6a2fd0" stroke-width="1" shape-rendering="auto"/>
<polyline points="388.8,135.0 400.0,131.0" fill="none" stroke="#6a2fd0" stroke-width="1" shape-rendering="auto"/>
<polyline points="445.0,131.0 462.0,133.0 493.8,134.0" fill="none" stroke="#6a2fd0" stroke-width="1" shape-rendering="auto"/>
<polyline points="587.0,134.5 608.8,146.0 620.0,150.0" fill="none" stroke="#6a2fd0" stroke-width="1" shape-rendering="auto"/>
<polyline points="587.0,134.5 578.0,148.0" fill="none" stroke="#6a2fd0" stroke-width="1" shape-rendering="auto"/>
<polyline points="671.0,138.0 680.0,150.0" fill="none" stroke="#6a2fd0" stroke-width="1" shape-rendering="auto"/>
<polyline points="796.0,131.0 791.8,145.0" fill="none" stroke="#6a2fd0" stroke-width="1" shape-rendering="auto"/>
<polyline points="935.7,205.0 951.0,239.0 954.4,245.8 950.0,266.0 941.5,329.0" fill="none" stroke="#6a2fd0" stroke-width="1" shape-rendering="auto"/>
<polyline points="949.3,431.7 963.3,522.0" fill="none" stroke="#6a2fd0" stroke-width="1" shape-rendering="auto"/>
<polyline points="974.0,431.7 978.0,380.0" fill="none" stroke="#6a2fd0" stroke-width="1" shape-rendering="auto"/>
<polyline points="934.0,440.0 940.0,431.0" fill="none" stroke="#6a2fd0" stroke-width="1" shape-rendering="auto"/>
<polyline points="145.4,320.0 150.2,329.5 160.3,354.8" fill="none" stroke="#5038a0" stroke-width="1" stroke-dasharray="2 1" shape-rendering="auto"/>
<polyline points="568.8,131.0 575.0,148.0" fill="none" stroke="#c8c8d8" stroke-width="1" shape-rendering="auto"/>
<path d="M322 206h1v1M637 626h1M11 340h1M934 475h1M199 232h1M135 138h1v1M951 455h1M241 423h1M249 269h1v1M164 346h1M709 140h1M70 622h1v1M46 519h1M153 589h1v1M90 550h1M308 308h1M203 382h1M303 247h1M483 132h1M66 265h1M25 360h1M232 578h1v1M315 550h1M68 269h1M948 193h1M935 554h1v1M941 482h1M228 148h1M945 234h1M262 488h1v1M40 406h1M866 623h1M167 478h1M225 422h1v1M105 179h1M38 337h1M871 143h1v1M106 322h1M106 202h1v1M235 200h1M329 620h1v1M337 560h1M61 414h1M254 612h1M22 455h1M66 617h1M512 141h1M257 412h1M62 203h1v1M239 202h1M143 354h1M118 619h1M362 625h1M183 515h1M187 282h1M160 275h1M351 626h1M524 628h1M952 276h1M282 332h1M65 309h1M172 463h1M77 136h1M171 522h1v1M325 223h1M710 132h1M185 539h1M262 414h1v1M73 372h1M159 202h1M211 571h1M315 569h1M378 139h1M332 389h1v1M294 236h1M293 247h1M98 362h1M290 304h1M297 165h1M330 551h1v1M122 364h1v1M157 262h1M246 429h1M329 618h1M311 157h1M944 264h1M225 177h1M942 295h1M971 283h1M51 218h1M466 625h1M132 185h1v1M253 280h1v1M109 542h1M950 474h1M180 180h1M236 145h1M218 148h1M17 368h1M939 523h1M131 242h1" stroke="#a0a0a0" stroke-width="1" fill="none" transform="translate(0,.5)"/>
<path d="M64 384h1M148 189h1v1M133 254h1M179 246h1M234 372h1M91 181h1M353 145h1v1M135 585h1M94 159h1M78 599h1M56 231h1M282 251h1M292 360h1M956 260h1M888 628h1M116 166h1M214 617h1M720 628h1M315 268h1M235 368h1M199 506h1M953 422h1M71 306h1M970 419h1M261 248h1M112 233h1M12 375h1v1M86 524h1v1M235 360h1v1M103 340h1M235 518h1M171 575h1M35 435h1M212 348h1M21 324h1M961 368h1M705 136h1M255 505h1M223 159h1M63 577h1M487 138h1M51 192h1M937 387h1M288 252h1M93 403h1v1M266 453h1M126 209h1M105 216h1M136 268h1v1M116 525h1M309 199h1M145 412h1M332 537h1v1M89 488h1M35 225h1M117 561h1M107 545h1M339 512h1v1M118 141h1v1M172 164h1M258 142h1M136 135h1M235 445h1M107 308h1M64 220h1M274 261h1M93 200h1M40 387h1M12 375h1M958 454h1M113 260h1M11 444h1M142 268h1M329 414h1M227 563h1M199 263h1M264 308h1M189 533h1M957 403h1M28 246h1M327 515h1M816 146h1v1M196 240h1M122 164h1v1M320 334h1v1M8 434h1M109 139h1M943 227h1v1M83 421h1v1M476 139h1M198 513h1v1M61 172h1M76 324h1" stroke="#d0d0d0" stroke-width="1" fill="none" transform="translate(0,.5)"/>
<path d="M44 347h1v1M155 374h1M171 189h1M338 157h1M222 244h1M952 328h1v1M256 212h1M245 612h1M143 392h1M137 310h1M113 208h1M306 141h1M172 132h1M936 192h1M265 172h1M248 253h1M157 572h1v1M260 519h1M19 294h1M22 406h1M149 272h1M199 194h1M47 411h1M40 205h1v1M101 449h1M50 396h1v1M240 583h1M72 564h1M945 382h1M111 234h1M20 339h1M227 611h1M301 370h1v1M56 280h1M46 190h1M93 564h1v1M49 546h1M202 505h1M223 150h1M110 292h1M257 192h1M102 275h1M250 341h1M950 518h1v1M238 148h1v1M270 516h1M36 470h1M302 320h1v1M46 286h1M60 479h1M261 403h1M240 151h1M295 352h1v1M117 387h1M66 299h1M322 624h1M244 248h1M458 137h1v1M165 145h1M338 589h1M225 436h1M328 166h1M106 175h1v1M61 475h1M258 583h1M136 419h1M342 201h1M125 471h1M938 311h1M225 575h1M319 349h1M313 206h1v1M273 237h1M37 519h1v1M68 233h1v1M107 184h1M961 348h1M230 326h1M157 140h1M110 523h1v1M703 624h1M225 163h1M232 350h1M148 532h1M486 625h1v1M227 610h1M237 313h1M119 597h1M165 176h1" stroke="#b0b0b0" stroke-width="1" fill="none" transform="translate(0,.5)"/>
<path d="M75 176h1M307 538h1M183 421h1v1M65 233h1M46 464h1v1M66 481h1v1M108 447h1M106 312h1M253 304h1M936 312h1M181 524h1v1M516 140h1M175 367h1M126 351h1M158 488h1M221 606h1M72 561h1M114 211h1M251 138h1M9 321h1v1M231 146h1M212 421h1M145 392h1M934 197h1M480 143h1M11 376h1M978 424h1M106 547h1M250 263h1M39 485h1v1M46 521h1M592 136h1v1M336 340h1M223 510h1M145 156h1M188 598h1M55 367h1M337 266h1v1M318 311h1M392 626h1M255 430h1M311 232h1v1M306 606h1M311 413h1M94 441h1M196 620h1v1M642 142h1v1M10 308h1v1M111 309h1M233 150h1M214 441h1v1M148 144h1M343 201h1M71 425h1M248 293h1M198 449h1M623 138h1M344 207h1M199 476h1M184 149h1M301 341h1M133 139h1M183 480h1M977 317h1M256 306h1M222 597h1M317 581h1M258 231h1M144 131h1v1M188 545h1v1M12 390h1M67 566h1M25 430h1M151 416h1M241 298h1v1M304 454h1M128 196h1v1M203 485h1M295 516h1M162 164h1M68 324h1v1M940 499h1M158 299h1M854 133h1M939 232h1M945 373h1M306 475h1v1M250 152h1M127 543h1v1M98 265h1v1M320 461h1M310 243h1M165 229h1M281 175h1M950 449h1M34 517h1v1M942 440h1M934 370h1M90 460h1M941 411h1M238 316h1v1M171 502h1M117 592h1M289 473h1v1M81 295h1M218 577h1M454 623h1v1M339 199h1M190 398h1M52 443h1v1M962 379h1M71 453h1M66 412h1M225 256h1M262 347h1M282 296h1M154 498h1v1M49 384h1M583 627h1M157 256h1M203 415h1M61 470h1M106 178h1M905 628h1v1M271 576h1v1M152 177h1M205 194h1v1M338 427h1M334 237h1M48 541h1M937 383h1v1M178 602h1v1M106 406h1M324 199h1M148 424h1v1M277 211h1M189 285h1M75 404h1M72 337h1v1M154 466h1v1M65 353h1M46 543h1M219 526h1M340 225h1v1M196 498h1v1M200 482h1M109 426h1M241 455h1v1M221 466h1M83 158h1M393 134h1M704 146h1v1M961 457h1M946 211h1M287 583h1M249 259h1v1M303 162h1M117 377h1M273 514h1v1M302 335h1M963 322h1M99 189h1v1M88 263h1M964 371h1M31 365h1M228 429h1M194 504h1M234 369h1M125 610h1M938 265h1M289 275h1M81 578h1M42 198h1M300 258h1M76 133h1M176 478h1M265 485h1v1M319 339h1M193 484h1M222 276h1M94 155h1M278 149h1" stroke="#ffffff" stroke-width="1" fill="none" transform="translate(0,.5)"/>
<path d="M128 242h1M245 417h1v1M29 361h1v1M86 355h1v1M938 206h1M261 313h1M259 476h1M150 543h1v1M252 277h1v1M192 367h1v1M341 546h1M263 610h1M95 330h1M50 547h1v1M66 327h1M733 146h1M924 143h1M101 379h1M47 277h1M219 314h1M145 232h1v1M127 254h1v1M132 345h1M97 351h1M210 262h1v1M138 598h1M64 519h1M308 280h1M116 148h1M28 259h1M114 448h1M130 361h1M326 225h1M312 444h1M281 253h1M63 544h1M329 289h1M126 613h1M56 517h1M330 433h1M93 533h1M152 153h1M204 163h1M935 377h1v1M530 141h1M60 389h1M125 427h1v1M309 251h1M19 306h1M114 243h1M148 418h1M104 317h1v1M976 302h1M313 579h1M244 325h1M308 567h1M244 217h1M120 586h1v1M347 131h1M54 252h1M212 587h1M323 364h1M283 461h1M341 572h1M215 280h1M325 504h1v1M327 177h1M297 143h1M116 617h1M102 215h1v1M125 374h1M140 344h1M255 435h1M82 538h1M312 258h1M57 282h1M225 403h1M342 602h1M172 600h1v1M200 240h1M266 252h1M188 565h1M35 382h1M167 446h1M157 518h1M138 137h1v1M216 423h1M376 135h1M76 292h1M207 252h1v1M145 584h1M755 134h1M211 260h1v1M252 313h1v1M249 528h1M77 241h1M182 136h1M341 464h1M22 397h1M314 490h1M62 434h1v1M317 368h1M133 363h1" stroke="#e8e8c0" stroke-width="1" fill="none" transform="translate(0,.5)"/>
<path d="M313 423h1M833 626h1M328 242h1v1M331 530h1M78 251h1M25 296h1M109 263h1v1M89 558h1M60 195h1v1M76 500h1M161 353h1M170 211h1M195 176h1M271 254h1M279 306h1M324 620h1M164 598h1M119 395h1v1M19 452h1v1M863 138h1M158 551h1M172 349h1M145 432h1M126 622h1M12 472h1M191 226h1M124 609h1M102 594h1M171 376h1M188 348h1M85 174h1M948 242h1M279 191h1M284 623h1v1M68 137h1M113 374h1M161 280h1M322 360h1v1M254 178h1M127 317h1M188 407h1M13 420h1M52 203h1M273 380h1M85 220h1v1M63 337h1v1M153 219h1v1M165 471h1M236 526h1M273 219h1M265 165h1v1M314 615h1M122 241h1M291 485h1M181 524h1M241 565h1M942 396h1v1M949 523h1M251 306h1M934 575h1M143 388h1M135 482h1v1M211 549h1M211 256h1M239 623h1M73 138h1M147 179h1v1M285 321h1v1M235 379h1M258 357h1M79 500h1M939 234h1M333 391h1M57 207h1v1M38 492h1" stroke="#f8c8c8" stroke-width="1" fill="none" transform="translate(0,.5)"/>
<path d="M65 514h1M170 516h1M960 458h1M111 410h1M79 465h1M270 195h1M311 283h1M275 155h1M340 176h1M856 141h1M578 131h1M953 254h1M950 286h1M225 339h1M150 327h1M879 146h1M123 225h1v1M69 181h1M43 221h1M172 522h1M201 434h1v1M227 183h1v1M265 451h1M208 262h1M106 611h1M164 521h1M133 518h1v1M46 491h1M155 138h1M310 494h1v1M169 560h1M111 446h1M148 565h1M266 336h1v1M159 266h1v1M223 386h1v1M805 625h1M159 483h1M180 555h1M130 488h1v1M298 572h1v1M66 271h1M199 481h1M247 200h1M188 449h1M95 150h1M337 349h1M119 221h1v1M228 416h1M22 427h1M195 353h1M301 284h1M333 377h1M218 415h1M847 627h1M200 188h1M265 584h1M64 347h1M48 548h1M248 501h1M102 453h1v1M38 327h1M97 489h1M233 229h1M63 547h1M297 322h1v1M206 584h1M116 284h1M275 164h1M115 243h1v1M953 504h1M130 230h1M45 177h1M241 595h1M250 336h1v1M34 475h1M241 216h1M142 227h1M206 286h1M74 505h1" stroke="#808080" stroke-width="1" fill="none" transform="translate(0,.5)"/>
<path d="M278 338h1M68 164h1M535 144h1M35 270h1M937 354h1M90 460h1M260 340h1M324 389h1M198 289h1v1M268 195h1M345 140h1M953 403h1M559 137h1M211 602h1M144 302h1M286 155h1M301 360h1v1M940 452h1M236 254h1M195 312h1M938 438h1M248 163h1M848 628h1M113 375h1M30 439h1M109 626h1M311 131h1M244 205h1M249 581h1M20 405h1M55 574h1M946 239h1v1M282 488h1v1M187 377h1M261 601h1M283 238h1M194 281h1M955 494h1v1M226 500h1M144 545h1M148 528h1M125 487h1M319 485h1M185 182h1M251 538h1M268 363h1M173 289h1M190 222h1M104 582h1M239 251h1v1M960 412h1M535 135h1M332 141h1M303 511h1M66 381h1M232 232h1v1M181 473h1M217 613h1v1M360 136h1v1M175 541h1v1M322 251h1M32 426h1M167 398h1M245 497h1M201 442h1M946 466h1M252 549h1v1M93 266h1M186 266h1M520 131h1v1M81 442h1M340 326h1M137 300h1M274 552h1M732 143h1M80 187h1M182 601h1M100 351h1M95 236h1M179 349h1M945 452h1M142 524h1M979 358h1v1M30 317h1M165 544h1M152 199h1M58 587h1M121 252h1M234 345h1M216 263h1M950 205h1v1M99 423h1" stroke="#c8d8f8" stroke-width="1" fill="none" transform="translate(0,.5)"/>
<path d="M210 211h1M341 263h1M228 389h1M918 624h1M131 206h1M109 548h1M80 263h1M151 257h1v1M285 597h1M297 499h1v1M210 583h1M240 259h1M234 590h1M132 256h1v1M294 606h1M235 339h1M220 330h1M841 628h1M136 244h1M334 505h1v1M83 585h1M111 594h1M318 342h1M158 208h1M185 457h1M45 402h1M106 417h1M212 472h1M274 330h1v1M220 530h1M298 423h1M317 345h1M254 149h1v1M203 221h1M89 156h1M666 137h1v1M274 233h1M293 333h1M531 629h1M172 264h1v1M61 575h1v1M193 272h1M210 605h1M113 411h1v1M296 163h1v1M286 152h1M119 275h1M197 173h1v1M296 415h1v1M115 530h1M340 206h1M172 311h1M572 623h1M167 264h1M322 581h1M112 496h1v1M298 627h1M160 561h1v1M151 499h1M223 201h1M392 628h1M204 342h1M952 486h1M204 157h1v1M57 287h1M273 528h1M63 478h1v1M331 355h1v1M200 332h1M230 505h1M903 136h1M953 485h1v1M166 386h1M821 627h1v1M312 443h1M21 260h1M134 611h1v1M207 461h1M141 250h1v1M235 214h1M263 526h1v1M232 177h1M259 342h1M160 243h1M124 383h1v1" stroke="#909090" stroke-width="1" fill="none" transform="translate(0,.5)"/>
<path d="M17 483v2M15 468v2M18 354v2M16 437v2M17 477v2M74 141v2M17 469v2M33 351v3M57 177v2M10 331v2M38 231v3M15 357v3M10 339v2M18 348v2M49 527v2M17 282v2M16 377v3M11 328v3M8 386v2M12 451v3M9 408v2M17 326v2M15 292v2M31 425v2M80 141v2M90 177v3M45 232v2M32 510v3M35 250v3M86 149v3M39 238v2M33 234v2M14 394v3M14 344v2M15 293v2M45 197v3M47 511v3M33 267v2M28 248v2M9 440v3M23 380v3M10 416v2M29 418v2M25 445v2M8 454v2M68 365v3M15 276v3M38 531v2M26 329v3M38 227v2M30 273v3M35 510v2M24 358v3M39 221v2M33 254v2M35 229v3M11 462v2M15 305v3M53 373v2M9 318v2M11 369v2M22 516v3M14 360v2M43 205v2M17 311v3M12 400v2M25 413v3M11 361v2M74 144v3M15 448v2M26 311v2M33 383v3M10 422v2M41 332v2M85 173v2M14 389v2M49 177v2M13 297v3M21 504v2M42 265v3M9 341v2M79 164v2M45 218v2M67 156v2M16 464v3M18 352v3M15 342v3M10 335v3M92 424v3M17 350v2M91 176v2M149 445v3M81 470v3M105 499v2M110 462v2M129 416v2M107 472v3M148 502v3M85 455v3M73 471v2M86 435v2M137 431v2M122 478v2M90 579v2M85 586v2M149 594v3M60 594v2M129 605v3M99 572v2M191 592v3M129 597v2M94 548v2M154 610v2M71 595v2M106 588v2M122 614v3M123 331v2M201 445v2M119 489v2M136 418v2M314 508v2M159 248v2M122 540v2M286 302v2M107 227v2M191 194v3M46 347v2M275 366v2M236 179v2M32 250v3M36 468v3M146 618v3M135 199v3M321 274v2M282 249v2M273 202v2M119 166v2M89 477v2M47 459v2M118 394v2M99 435v3M95 435v3M28 441v3M11 418v2M65 415v3M20 482v3M84 419v3M21 422v2M75 431v2M61 454v2M84 429v3M67 472v3M81 439v2M46 448v2M32 418v2M41 401v3M943 448v2M947 405v2M953 490v3M942 400v2M945 296v3M949 288v3M946 425v2M950 366v3M959 372v2M952 231v3M941 429v3M952 455v2M961 233v2M945 195v2M970 410v3M939 273v2M949 195v3M934 339v3M951 457v3M935 239v2M947 228v3M945 473v3M936 415v3M941 317v2M953 319v2M946 472v3M938 524v2M936 283v3M942 238v3M938 174v2M944 517v2M940 284v2M944 480v2M938 378v3M941 540v2M940 283v2M951 350v3M937 272v2M946 440v2M940 513v3M952 293v2M941 247v2M948 298v2M949 420v2M954 389v2M947 288v2M949 339v2M966 365v2M940 507v2M943 378v2M940 267v2M944 191v2M943 445v3M935 240v3M949 262v2M940 557v2M946 295v2M937 321v2M936 333v2M934 495v2M952 510v3M941 384v2M942 301v2M951 525v3M945 535v3M934 242v2M935 204v2M948 508v2M943 224v2M938 537v3M941 383v2M948 321v3M943 419v2M960 265v2M966 396v2M942 298v2M941 318v3M943 436v2M948 250v2M940 196v2M942 387v2M944 450v3M936 342v2M955 230v2M944 286v2M943 239v2M942 247v3M937 305v2M937 172v2M951 399v2M967 378v2M943 195v3M953 295v2M937 383v3M947 361v2M944 385v3M940 302v3M936 378v3M946 346v2M947 295v2M951 230v2M939 332v2M952 213v3M955 224v3M945 379v3M939 240v2M943 269v2M940 173v2M956 350v2M937 202v2M948 358v2M934 386v2M943 313v2M938 277v3M954 272v2M947 210v3M935 189v2M944 396v2M935 353v2M934 216v2M945 317v3M941 234v3M943 222v2M953 210v2M959 330v3M948 300v2M954 242v3M940 346v2M955 346v2M962 399v3M942 182v3M940 366v3M965 238v2M947 368v2M946 366v2M948 199v3M937 265v2M937 241v2M950 371v2M946 286v2M949 313v2M938 251v3M955 394v2M943 287v3M939 265v2M939 350v3M948 345v2M950 236v2M946 384v2M958 373v3M945 232v2M943 205v3M935 393v2M764 136v3M894 144v2M661 137v3M774 133v2M696 137v2M811 144v3M883 142v3M885 133v3M650 142v2M653 146v3M788 137v2M691 137v3M872 145v2M812 138v2M754 139v2M787 140v2M782 141v3M863 146v3M849 144v2M454 141v3M589 139v2M566 144v2" stroke="#d81828" stroke-width="1" fill="none" transform="translate(.5,0)"/>
<path d="M54 222v2M20 283v2M84 134v3M30 234v2M56 596v2M45 193v3M24 443v2M26 424v3M34 311v2M88 164v2M25 352v2M46 190v2M74 162v3M41 450v2M41 208v2M51 517v3M48 217v3M19 257v2M34 378v2M41 471v3M61 285v2M31 473v3M27 357v2M28 243v2M37 284v3M32 446v2M72 295v3M64 495v3M55 170v3M39 335v2M45 217v2M18 293v2M37 560v2M28 316v2M55 210v2M52 511v2M23 509v3M59 163v3M34 322v3M22 346v2M22 447v3M28 410v2M36 506v3M31 454v3M23 429v3M41 477v2M42 273v2M27 376v2M55 317v2M40 282v3M39 302v3M57 494v2M25 241v2M45 528v2M34 262v2M37 453v2M66 271v2M40 199v3M21 313v2M23 384v2M50 344v2M33 379v2M48 313v3M62 152v2M20 340v3M22 379v2M23 259v2M21 377v2M70 159v2M34 368v2M62 153v2M20 446v2M27 282v2M58 170v2M89 140v2M41 381v2M45 299v3M34 451v3M39 279v2M36 361v3M35 265v2M41 545v2M32 224v2M21 302v3M21 421v3M85 162v2M49 464v2M65 152v3M63 194v3M56 335v3M33 234v2M23 373v2M22 478v2M52 198v2M25 515v3M58 568v2M41 312v2M60 179v2M48 222v2M26 246v2M32 245v2M29 369v2M52 236v2M28 446v2M44 202v3M30 365v2M72 152v2M63 189v2M27 419v2M83 154v2M70 157v3M43 250v2M36 204v3M23 261v2M36 350v2M28 292v3M67 190v2M39 206v3M51 467v2M28 354v2M47 581v2M18 482v2M42 353v2M20 420v3M58 512v2M38 196v3M25 382v2M27 436v3M37 389v2M155 479v2M131 457v3M127 447v2M72 454v3M96 463v2M127 512v2M102 451v2M132 452v2M143 431v2M121 494v2M94 438v3M140 421v2M133 504v2M100 510v2M127 452v3M136 514v3M155 448v2M155 454v3M85 451v2M135 487v3M152 450v2M111 499v3M114 435v2M124 451v2M129 470v2M155 449v2M122 411v2M112 445v2M114 416v2M99 422v3M143 460v2M120 445v2M84 411v2M123 487v2M76 440v2M91 541v3M117 424v2M122 403v2M82 439v2M113 381v2M132 422v3M110 429v3M110 495v2M118 506v3M133 469v2M105 475v2M83 412v2M140 446v3M106 492v2M135 460v3M103 453v2M136 445v3M103 446v3M108 464v2M90 408v3M122 456v2M133 400v2M140 447v3M113 611v3M78 606v3M134 615v2M143 613v2M122 619v2M131 576v3M119 591v2M120 574v2M64 571v3M69 588v2M140 614v2M125 597v2M140 607v3M158 591v3M182 611v2M116 610v2M86 623v2M159 589v3M113 595v2M99 629v3M147 610v2M179 610v2M88 619v3M83 588v3M158 579v3M109 602v2M149 592v2M141 593v2M162 587v3M140 611v2M77 555v2M67 609v2M120 599v3M122 614v2M108 566v2M155 591v2M136 592v2M167 568v2M123 573v3M196 601v2M123 617v2M54 587v3M100 604v3M104 592v2M72 582v3M91 625v3M105 575v2M114 599v3M78 615v2M165 604v3M158 588v2M126 629v3M93 582v3M167 589v2M147 598v2M82 608v2M56 598v3M104 138v2M149 589v2M273 325v2M253 510v3M65 357v3M296 331v3M116 448v2M178 144v2M251 596v3M300 246v3M132 435v2M210 295v3M204 587v3M138 506v2M326 572v3M282 201v2M274 142v2M293 560v3M163 621v2M113 240v2M177 132v2M80 335v2M94 296v3M188 168v2M187 478v2M223 167v3M195 485v2M124 143v3M107 139v2M193 395v2M162 427v3M122 396v2M93 179v2M330 501v2M272 554v3M68 488v2M280 597v2M167 520v3M92 440v3M201 539v3M190 558v2M27 529v2M145 553v3M237 542v3M157 426v3M236 488v2M248 622v3M115 161v2M96 251v3M43 356v2M322 450v2M85 245v3M41 422v3M343 597v2M61 320v2M158 398v2M197 377v2M276 556v3M299 378v2M40 430v3M310 210v3M133 428v2M158 538v2M297 382v2M174 399v3M84 547v2M47 220v3M163 613v2M304 364v2M32 460v2M44 426v2M118 420v2M69 486v2M80 516v2M76 512v2M58 352v2M94 451v2M65 427v2M125 404v2M81 373v2M30 489v2M40 399v2M47 417v2M79 375v3M65 350v3M39 436v3M63 425v2M61 414v2M19 455v3M66 385v3M74 408v2M25 418v3M66 489v2M30 391v3M91 419v3M75 472v2M36 387v2M74 401v2M45 389v2M67 406v3M59 434v2M80 537v2M76 418v2M82 413v2M69 440v3M67 417v3M57 420v3M72 434v2M83 397v2M61 466v2M951 355v2M938 550v2M935 244v2M958 458v2M936 451v3M935 447v2M939 545v2M941 315v3M950 530v2M939 469v2M940 266v2M950 205v2M947 282v2M950 343v2M950 394v2M955 473v3M957 293v3M952 490v2M959 346v2M935 554v3M939 380v3M934 563v2M947 302v2M940 181v3M945 533v2M939 541v3M943 253v2M934 382v2M945 236v2M935 372v3M934 225v3M970 382v2M934 471v2M945 188v2M934 177v3M945 200v3M955 236v3M949 488v2M941 252v3M941 279v3M941 517v2M950 250v2M934 194v3M943 179v3M935 190v2M948 453v2M938 186v3M937 474v2M934 367v3M947 297v3M950 252v2M947 299v3M937 374v3M940 185v3M943 342v2M935 225v2M947 491v2M949 465v2M937 429v3M963 342v2M934 577v2M940 184v2M953 255v2M944 466v2M953 438v2M938 266v3M958 374v2M937 390v2M950 243v2M959 343v2M934 390v2M962 374v2M934 362v3M954 204v3M935 397v2M962 358v2M959 226v3M934 224v3M937 267v3M939 315v3M940 354v3M935 214v2M935 358v2M934 242v2M948 292v2M941 262v2M941 300v3M948 285v2M952 388v2M942 323v2M937 202v3M947 295v2M934 273v2M950 275v2M943 229v3M956 392v2M944 270v2M940 332v3M934 398v2M942 322v2M951 282v2M944 376v2M938 363v2M957 325v2M937 236v2M934 379v3M937 303v3M781 136v2M820 146v2M861 134v2M887 144v3M885 138v3M845 143v2M862 132v3M661 139v2M799 143v2M889 139v3M914 132v2M658 146v3M893 132v2M899 135v3M767 145v2M724 135v2M732 133v2M810 142v3M785 134v3M722 138v2M652 132v2M866 131v2M685 146v2M863 142v2M750 139v2M697 131v2M703 133v2M799 137v2M791 136v2M928 142v2M802 137v2M848 145v2M867 142v2M864 146v3M655 142v2M798 133v2M884 134v2M924 132v3M804 138v2M918 132v2M675 144v2M652 138v2M664 138v2M809 138v2M652 137v2M803 135v3M785 132v3M674 133v2M796 131v2M811 146v3M725 138v2M886 141v2M710 141v3M795 133v3M650 141v2M667 137v2M872 131v2M745 143v3M672 138v3M694 134v3M770 141v2M372 139v2M500 143v2M549 141v2M451 138v3M404 133v2M483 134v2M416 138v2M349 137v2M603 138v3M483 145v2M408 136v2M577 135v2" stroke="#7a0c14" stroke-width="1" fill="none" transform="translate(.5,0)"/>
<path d="M99 134l5.0 5.0M104 134l-5.0 5.0M128 131l5.0 5.0M134 131l-5.0 5.0M108 154l5.0 5.0M113 154l-5.0 5.0M109 173l5.0 5.0M114 173l-5.0 5.0M109 190l5.0 5.0M114 190l-5.0 5.0M66 198l5.0 5.0M70 198l-5.0 5.0M40 200l5.0 5.0M45 200l-5.0 5.0M40 215l5.0 5.0M45 215l-5.0 5.0M37 242l5.0 5.0M42 242l-5.0 5.0M66 236l5.0 5.0M70 236l-5.0 5.0M48 265l5.0 5.0M53 265l-5.0 5.0M37 306l5.0 5.0M42 306l-5.0 5.0M81 318l5.0 5.0M86 318l-5.0 5.0M76 330l5.0 5.0M81 330l-5.0 5.0M48 340l5.0 5.0M53 340l-5.0 5.0M104 312l5.0 5.0M108 312l-5.0 5.0M110 302l5.0 5.0M114 302l-5.0 5.0M104 338l5.0 5.0M108 338l-5.0 5.0M16 364l5.0 5.0M21 364l-5.0 5.0M161 364l5.0 5.0M166 364l-5.0 5.0M206 336l5.0 5.0M211 336l-5.0 5.0M146 264l5.0 5.0M151 264l-5.0 5.0M186 259l5.0 5.0M192 259l-5.0 5.0M176 288l5.0 5.0M181 288l-5.0 5.0M212 277l5.0 5.0M217 277l-5.0 5.0M235 248l5.0 5.0M240 248l-5.0 5.0M225 196l5.0 5.0M230 196l-5.0 5.0M166 229l5.0 5.0M170 229l-5.0 5.0M172 232l5.0 5.0M176 232l-5.0 5.0M184 154l5.0 5.0M190 154l-5.0 5.0M292 159l5.0 5.0M297 159l-5.0 5.0M296 218l5.0 5.0M300 218l-5.0 5.0M327 226l5.0 5.0M332 226l-5.0 5.0M328 302l5.0 5.0M333 302l-5.0 5.0M234 356l5.0 5.0M240 356l-5.0 5.0M141 313l5.0 5.0M146 313l-5.0 5.0M49 399l5.0 5.0M54 399l-5.0 5.0M47 408l5.0 5.0M52 408l-5.0 5.0M164 384l5.0 5.0M169 384l-5.0 5.0M182 386l5.0 5.0M188 386l-5.0 5.0M79 428l5.0 5.0M84 428l-5.0 5.0M111 431l5.0 5.0M116 431l-5.0 5.0M158 450l5.0 5.0M163 450l-5.0 5.0M234 458l5.0 5.0M240 458l-5.0 5.0M226 424l5.0 5.0M232 424l-5.0 5.0M308 402l5.0 5.0M312 402l-5.0 5.0M314 406l5.0 5.0M320 406l-5.0 5.0M308 412l5.0 5.0M313 412l-5.0 5.0M55 462l5.0 5.0M60 462l-5.0 5.0M67 462l5.0 5.0M72 462l-5.0 5.0M72 458l5.0 5.0M76 458l-5.0 5.0M70 476l5.0 5.0M74 476l-5.0 5.0M99 480l5.0 5.0M104 480l-5.0 5.0M136 498l5.0 5.0M142 498l-5.0 5.0M168 503l5.0 5.0M173 503l-5.0 5.0M82 512l5.0 5.0M87 512l-5.0 5.0M88 507l5.0 5.0M92 507l-5.0 5.0M100 522l5.0 5.0M105 522l-5.0 5.0M106 524l5.0 5.0M112 524l-5.0 5.0M126 518l5.0 5.0M130 518l-5.0 5.0M130 516l5.0 5.0M135 516l-5.0 5.0M182 522l5.0 5.0M187 522l-5.0 5.0M100 546l5.0 5.0M104 546l-5.0 5.0M108 558l5.0 5.0M114 558l-5.0 5.0M124 562l5.0 5.0M129 562l-5.0 5.0M180 546l5.0 5.0M185 546l-5.0 5.0M174 562l5.0 5.0M179 562l-5.0 5.0M182 570l5.0 5.0M188 570l-5.0 5.0M190 583l5.0 5.0M194 583l-5.0 5.0M200 588l5.0 5.0M204 588l-5.0 5.0M204 585l5.0 5.0M210 585l-5.0 5.0M232 565l5.0 5.0M237 565l-5.0 5.0M286 602l5.0 5.0M292 602l-5.0 5.0M304 536l5.0 5.0M309 536l-5.0 5.0M99 570l5.0 5.0M104 570l-5.0 5.0M64 593l5.0 5.0M70 593l-5.0 5.0M104 610l5.0 5.0M108 610l-5.0 5.0M110 620l5.0 5.0M114 620l-5.0 5.0M436 142l5.0 5.0M441 142l-5.0 5.0M520 138l5.0 5.0M526 138l-5.0 5.0M526 136l5.0 5.0M532 136l-5.0 5.0M636 134l5.0 5.0M642 134l-5.0 5.0M664 130l5.0 5.0M670 130l-5.0 5.0M818 142l5.0 5.0M823 142l-5.0 5.0M896 136l5.0 5.0M901 136l-5.0 5.0M940 206l5.0 5.0M945 206l-5.0 5.0M948 199l5.0 5.0M954 199l-5.0 5.0M952 230l5.0 5.0M957 230l-5.0 5.0M935 218l5.0 5.0M940 218l-5.0 5.0M939 280l5.0 5.0M944 280l-5.0 5.0M952 288l5.0 5.0M957 288l-5.0 5.0M960 300l5.0 5.0M966 300l-5.0 5.0M969 294l5.0 5.0M974 294l-5.0 5.0M944 318l5.0 5.0M948 318l-5.0 5.0M954 318l5.0 5.0M958 318l-5.0 5.0M955 328l5.0 5.0M960 328l-5.0 5.0M942 340l5.0 5.0M946 340l-5.0 5.0M960 342l5.0 5.0M966 342l-5.0 5.0M966 352l5.0 5.0M970 352l-5.0 5.0M974 330l5.0 5.0M979 330l-5.0 5.0M941 475l5.0 5.0M946 475l-5.0 5.0M934 490l5.0 5.0M939 490l-5.0 5.0M10 158l5.0 5.0M14 158l-5.0 5.0M18 228l5.0 5.0M22 228l-5.0 5.0M12 328l5.0 5.0M18 328l-5.0 5.0M22 418l5.0 5.0M28 418l-5.0 5.0M28 468l5.0 5.0M32 468l-5.0 5.0M12 452l5.0 5.0M16 452l-5.0 5.0" stroke="#d0d0d0" stroke-width="1" fill="none" shape-rendering="auto"/>
<path d="M969 486l5.0 5.0M974 486l-5.0 5.0M938 248l5.0 5.0M942 248l-5.0 5.0M956 278l5.0 5.0M960 278l-5.0 5.0M946 298l5.0 5.0M950 298l-5.0 5.0M964 318l5.0 5.0M968 318l-5.0 5.0M40 202l5.0 5.0M46 202l-5.0 5.0M22 268l5.0 5.0M26 268l-5.0 5.0M34 294l5.0 5.0M38 294l-5.0 5.0M934 168l5.0 5.0M940 168l-5.0 5.0M938 178l5.0 5.0M944 178l-5.0 5.0M942 188l5.0 5.0M946 188l-5.0 5.0M948 198l5.0 5.0M952 198l-5.0 5.0M946 208l5.0 5.0M950 208l-5.0 5.0M952 212l5.0 5.0M958 212l-5.0 5.0M950 226l5.0 5.0M954 226l-5.0 5.0M958 230l5.0 5.0M962 230l-5.0 5.0M954 242l5.0 5.0M960 242l-5.0 5.0M962 252l5.0 5.0M966 252l-5.0 5.0M960 268l5.0 5.0M964 268l-5.0 5.0M966 272l5.0 5.0M970 272l-5.0 5.0M964 288l5.0 5.0M968 288l-5.0 5.0M970 298l5.0 5.0M974 298l-5.0 5.0M968 310l5.0 5.0M972 310l-5.0 5.0M972 320l5.0 5.0M978 320l-5.0 5.0M970 336l5.0 5.0M974 336l-5.0 5.0M974 348l5.0 5.0M978 348l-5.0 5.0" stroke="#f08080" stroke-width="1" fill="none" shape-rendering="auto"/>
<path d="M194 162h3m4 0h3M198 157v3m0 4v3M273 157h3m4 0h3M278 152v3m0 4v3M171 191h3m4 0h3M176 186v3m0 4v3M201 190h3m4 0h3M206 185v3m0 4v3M197 244h3m4 0h3M202 239v3m0 4v3M178 272h3m4 0h3M183 267v3m0 4v3M164 277h3m4 0h3M168 272v3m0 4v3M184 296h3m4 0h3M189 291v3m0 4v3M170 304h3m4 0h3M174 299v3m0 4v3M182 332h3m4 0h3M188 327v3m0 4v3M262 329h3m4 0h3M267 324v3m0 4v3M262 335h3m4 0h3M268 330v3m0 4v3M264 366h3m4 0h3M269 361v3m0 4v3M292 350h3m4 0h3M297 345v3m0 4v3M72 375h3m4 0h3M77 370v3m0 4v3M183 138h3m4 0h3M188 133v3m0 4v3M227 415h3m4 0h3M232 410v3m0 4v3M294 393h3m4 0h3M299 388v3m0 4v3M322 423h3m4 0h3M327 418v3m0 4v3M335 475h3m4 0h3M340 470v3m0 4v3M301 533h3m4 0h3M306 528v3m0 4v3M168 556h3m4 0h3M173 551v3m0 4v3M338 396h3m4 0h3M343 391v3m0 4v3M932 458h3m4 0h3M937 452v3m0 4v3M375 626h3m4 0h3M380 621v3m0 4v3M765 628h3m4 0h3M770 623v3m0 4v3" stroke="#20c020" stroke-width="1" fill="none" transform="translate(.5,.5)"/>
<g fill="none" stroke="#20e020" stroke-width="1"><rect x="121.5" y="198.5" width="8" height="8"/><rect x="123.5" y="205.5" width="4" height="3"/><rect x="132.5" y="199.5" width="10" height="10"/><rect x="226.5" y="227.5" width="6" height="6"/><circle cx="193.5" cy="195.5" r="2.5" shape-rendering="auto"/><rect x="131" y="195" width="2" height="3" fill="#20e020"/><rect x="230" y="196" width="3" height="3" fill="#20e020"/></g>
<circle cx="150.5" cy="218.5" r="2.5" fill="none" stroke="#c030c0" shape-rendering="auto"/>
<circle cx="246" cy="186.7" r="3" fill="none" stroke="#f0a0a0" stroke-width="2" shape-rendering="auto"/>
<circle cx="139.0" cy="177.0" r="3.15" fill="#f4a4a4" shape-rendering="auto"/>
<circle cx="140.0" cy="181.0" r="3.60" fill="#f4a4a4" shape-rendering="auto"/>
<circle cx="104.3" cy="220.5" r="4.05" fill="#f8d0a8" shape-rendering="auto"/>
<circle cx="158.0" cy="199.0" r="3.15" fill="#f8f0a8" shape-rendering="auto"/>
<circle cx="115.4" cy="162.0" r="2.70" fill="#f8f0a8" shape-rendering="auto"/>
<circle cx="96.4" cy="165.5" r="2.25" fill="#f4a4a4" shape-rendering="auto"/>
<circle cx="155.5" cy="165.0" r="2.25" fill="#f4a4a4" shape-rendering="auto"/>
<circle cx="57.0" cy="162.0" r="2.70" fill="#a4b8f0" shape-rendering="auto"/>
<circle cx="72.0" cy="148.0" r="1.80" fill="#f4a4a4" shape-rendering="auto"/>
<circle cx="72.7" cy="141.0" r="1.80" fill="#f4a4a4" shape-rendering="auto"/>
<circle cx="207.0" cy="148.0" r="3.15" fill="#f4a4a4" shape-rendering="auto"/>
<circle cx="214.0" cy="161.0" r="2.25" fill="#f4a4a4" shape-rendering="auto"/>
<circle cx="231.0" cy="175.0" r="2.25" fill="#f8f0a8" shape-rendering="auto"/>
<circle cx="294.7" cy="134.5" r="3.60" fill="#a4b8f0" shape-rendering="auto"/>
<circle cx="243.0" cy="139.5" r="1.80" fill="#a4b8f0" shape-rendering="auto"/>
<circle cx="324.0" cy="171.0" r="2.25" fill="#f4a4a4" shape-rendering="auto"/>
<circle cx="313.0" cy="206.0" r="1.80" fill="#f8f0a8" shape-rendering="auto"/>
<circle cx="332.6" cy="217.3" r="1.80" fill="#f8f0a8" shape-rendering="auto"/>
<circle cx="335.0" cy="235.7" r="1.80" fill="#a8dcf4" shape-rendering="auto"/>
<circle cx="251.7" cy="210.4" r="2.25" fill="#f4a4a4" shape-rendering="auto"/>
<circle cx="275.7" cy="228.7" r="2.25" fill="#a4b8f0" shape-rendering="auto"/>
<circle cx="198.0" cy="205.0" r="1.80" fill="#a4b8f0" shape-rendering="auto"/>
<circle cx="167.0" cy="183.0" r="2.25" fill="#f4a4a4" shape-rendering="auto"/>
<circle cx="175.8" cy="211.6" r="2.25" fill="#f4a4a4" shape-rendering="auto"/>
<circle cx="176.4" cy="228.7" r="1.80" fill="#a4b8f0" shape-rendering="auto"/>
<circle cx="126.5" cy="235.7" r="2.25" fill="#f8f0a8" shape-rendering="auto"/>
<circle cx="135.0" cy="246.7" r="2.25" fill="#f4a4a4" shape-rendering="auto"/>
<circle cx="31.0" cy="253.0" r="4.05" fill="#f8d0a8" shape-rendering="auto"/>
<circle cx="19.0" cy="276.0" r="4.95" fill="#f07070" shape-rendering="auto"/>
<circle cx="47.4" cy="281.5" r="3.15" fill="#f8f0a8" shape-rendering="auto"/>
<circle cx="67.0" cy="270.4" r="2.25" fill="#f8f0a8" shape-rendering="auto"/>
<circle cx="80.6" cy="280.5" r="2.25" fill="#f4a4a4" shape-rendering="auto"/>
<circle cx="57.0" cy="219.0" r="1.80" fill="#f8f0a8" shape-rendering="auto"/>
<circle cx="70.8" cy="245.8" r="1.80" fill="#f8f0a8" shape-rendering="auto"/>
<circle cx="19.6" cy="301.4" r="3.15" fill="#f8f0a8" shape-rendering="auto"/>
<circle cx="20.5" cy="309.0" r="2.70" fill="#f8d0a8" shape-rendering="auto"/>
<circle cx="89.5" cy="308.4" r="3.15" fill="#f4a4a4" shape-rendering="auto"/>
<circle cx="64.8" cy="340.0" r="2.25" fill="#f8f0a8" shape-rendering="auto"/>
<circle cx="206.0" cy="268.0" r="3.15" fill="#f4a4a4" shape-rendering="auto"/>
<circle cx="226.0" cy="269.8" r="3.15" fill="#f07070" shape-rendering="auto"/>
<circle cx="238.7" cy="269.0" r="1.80" fill="#f8f0a8" shape-rendering="auto"/>
<circle cx="237.7" cy="273.6" r="1.80" fill="#f8f0a8" shape-rendering="auto"/>
<circle cx="143.8" cy="275.8" r="1.80" fill="#a8dcf4" shape-rendering="auto"/>
<circle cx="315.5" cy="268.8" r="3.15" fill="#f4a4a4" shape-rendering="auto"/>
<circle cx="306.7" cy="281.5" r="4.05" fill="#a8dcf4" shape-rendering="auto"/>
<circle cx="237.7" cy="333.0" r="4.05" fill="#f4a4a4" shape-rendering="auto"/>
<circle cx="234.0" cy="350.0" r="6.75" fill="#a8dcf4" shape-rendering="auto"/>
<circle cx="229.8" cy="372.5" r="2.70" fill="#f8f0a8" shape-rendering="auto"/>
<circle cx="265.6" cy="351.7" r="1.80" fill="#f4a4a4" shape-rendering="auto"/>
<circle cx="290.9" cy="381.0" r="2.70" fill="#f8f0a8" shape-rendering="auto"/>
<circle cx="145.4" cy="320.0" r="3.15" fill="#a4b8f0" shape-rendering="auto"/>
<circle cx="150.2" cy="329.5" r="3.15" fill="#f8f0a8" shape-rendering="auto"/>
<circle cx="136.0" cy="322.0" r="1.80" fill="#f4a4a4" shape-rendering="auto"/>
<circle cx="141.3" cy="328.0" r="1.80" fill="#a4b8f0" shape-rendering="auto"/>
<circle cx="160.3" cy="354.8" r="3.15" fill="#a4b8f0" shape-rendering="auto"/>
<circle cx="9.5" cy="314.7" r="1.80" fill="#a8dcf4" shape-rendering="auto"/>
<circle cx="41.0" cy="261.6" r="1.80" fill="#a4b8f0" shape-rendering="auto"/>
<circle cx="30.0" cy="260.0" r="1.80" fill="#a8dcf4" shape-rendering="auto"/>
<circle cx="106.0" cy="186.6" r="1.80" fill="#a4b8f0" shape-rendering="auto"/>
<circle cx="11.0" cy="384.7" r="2.70" fill="#a4b8f0" shape-rendering="auto"/>
<circle cx="71.0" cy="401.5" r="4.50" fill="#f4a4a4" shape-rendering="auto"/>
<circle cx="52.0" cy="444.0" r="2.70" fill="#a8dcf4" shape-rendering="auto"/>
<circle cx="24.7" cy="415.4" r="2.70" fill="#a4b8f0" shape-rendering="auto"/>
<circle cx="110.7" cy="426.8" r="2.70" fill="#f8d0a8" shape-rendering="auto"/>
<circle cx="105.3" cy="386.3" r="1.80" fill="#f8f0a8" shape-rendering="auto"/>
<circle cx="110.0" cy="383.8" r="1.80" fill="#f8f0a8" shape-rendering="auto"/>
<circle cx="91.7" cy="421.0" r="1.35" fill="#e040e0" shape-rendering="auto"/>
<circle cx="247.0" cy="415.7" r="3.15" fill="#f8f0a8" shape-rendering="auto"/>
<circle cx="219.0" cy="441.6" r="3.60" fill="#a4b8f0" shape-rendering="auto"/>
<circle cx="295.6" cy="404.7" r="1.80" fill="#f8f0a8" shape-rendering="auto"/>
<circle cx="280.7" cy="425.0" r="1.80" fill="#a4b8f0" shape-rendering="auto"/>
<circle cx="177.0" cy="459.7" r="1.80" fill="#f4a4a4" shape-rendering="auto"/>
<circle cx="184.0" cy="471.0" r="1.80" fill="#f4a4a4" shape-rendering="auto"/>
<circle cx="195.0" cy="469.8" r="1.80" fill="#f4a4a4" shape-rendering="auto"/>
<circle cx="57.9" cy="451.8" r="1.80" fill="#f4a4a4" shape-rendering="auto"/>
<circle cx="41.0" cy="462.8" r="1.80" fill="#f4a4a4" shape-rendering="auto"/>
<circle cx="69.0" cy="496.0" r="3.60" fill="#f8d0a8" shape-rendering="auto"/>
<circle cx="58.8" cy="510.6" r="2.70" fill="#a8dcf4" shape-rendering="auto"/>
<circle cx="118.6" cy="524.0" r="3.60" fill="#f8d0a8" shape-rendering="auto"/>
<circle cx="188.7" cy="532.7" r="2.70" fill="#a8dcf4" shape-rendering="auto"/>
<circle cx="180.0" cy="530.8" r="1.80" fill="#a8dcf4" shape-rendering="auto"/>
<circle cx="173.0" cy="497.0" r="1.80" fill="#f4a4a4" shape-rendering="auto"/>
<circle cx="120.0" cy="545.0" r="1.80" fill="#a8dcf4" shape-rendering="auto"/>
<circle cx="76.5" cy="509.6" r="1.80" fill="#a4b8f0" shape-rendering="auto"/>
<circle cx="49.6" cy="490.0" r="1.80" fill="#a4b8f0" shape-rendering="auto"/>
<circle cx="243.4" cy="539.7" r="2.70" fill="#f8f0a8" shape-rendering="auto"/>
<circle cx="241.0" cy="543.0" r="1.80" fill="#a4b8f0" shape-rendering="auto"/>
<circle cx="248.0" cy="559.0" r="3.60" fill="#f8f0a8" shape-rendering="auto"/>
<circle cx="247.0" cy="586.0" r="1.80" fill="#f8f0a8" shape-rendering="auto"/>
<circle cx="321.8" cy="576.6" r="1.80" fill="#f4a4a4" shape-rendering="auto"/>
<circle cx="193.8" cy="601.0" r="2.70" fill="#a8dcf4" shape-rendering="auto"/>
<circle cx="171.7" cy="605.4" r="1.80" fill="#f4a4a4" shape-rendering="auto"/>
<circle cx="206.4" cy="618.7" r="1.80" fill="#a8dcf4" shape-rendering="auto"/>
<circle cx="166.0" cy="558.6" r="1.80" fill="#f8f0a8" shape-rendering="auto"/>
<circle cx="332.6" cy="628.8" r="1.80" fill="#f8f0a8" shape-rendering="auto"/>
<circle cx="20.0" cy="489.0" r="3.15" fill="#f8d0a8" shape-rendering="auto"/>
<circle cx="12.6" cy="465.0" r="1.80" fill="#f4a4a4" shape-rendering="auto"/>
<circle cx="12.0" cy="473.0" r="1.80" fill="#f8f0a8" shape-rendering="auto"/>
<circle cx="388.8" cy="135.0" r="2.70" fill="#a4b8f0" shape-rendering="auto"/>
<circle cx="462.0" cy="133.0" r="2.25" fill="#f4a4a4" shape-rendering="auto"/>
<circle cx="493.8" cy="134.0" r="4.05" fill="#a8dcf4" shape-rendering="auto"/>
<circle cx="587.0" cy="134.5" r="3.60" fill="#f8d0a8" shape-rendering="auto"/>
<circle cx="608.8" cy="147.0" r="3.15" fill="#a8dcf4" shape-rendering="auto"/>
<circle cx="671.0" cy="138.0" r="2.70" fill="#f07070" shape-rendering="auto"/>
<circle cx="792.0" cy="145.0" r="2.25" fill="#a8dcf4" shape-rendering="auto"/>
<circle cx="954.4" cy="245.8" r="2.70" fill="#f8f0a8" shape-rendering="auto"/>
<circle cx="962.0" cy="239.7" r="2.70" fill="#a8dcf4" shape-rendering="auto"/>
<circle cx="968.0" cy="299.0" r="1.80" fill="#f4a4a4" shape-rendering="auto"/>
<circle cx="977.5" cy="371.7" r="2.70" fill="#a8dcf4" shape-rendering="auto"/>
<circle cx="941.5" cy="329.0" r="4.95" fill="#a4b8f0" shape-rendering="auto"/>
<circle cx="949.3" cy="431.7" r="3.60" fill="#f8d0a8" shape-rendering="auto"/>
<circle cx="974.0" cy="431.7" r="3.60" fill="#f8d0a8" shape-rendering="auto"/>
<circle cx="963.3" cy="522.0" r="2.25" fill="#a4b8f0" shape-rendering="auto"/>
<circle cx="948.6" cy="520.0" r="1.80" fill="#a8dcf4" shape-rendering="auto"/>
<circle cx="936.7" cy="569.5" r="2.25" fill="#a4b8f0" shape-rendering="auto"/>
<circle cx="945.0" cy="576.6" r="1.80" fill="#f8d0a8" shape-rendering="auto"/>
<circle cx="951.0" cy="389.5" r="2.25" fill="#f8f0a8" shape-rendering="auto"/>
<circle cx="936.0" cy="215.0" r="2.25" fill="#f4a4a4" shape-rendering="auto"/>
<circle cx="390.0" cy="627.0" r="3.15" fill="#a8dcf4" shape-rendering="auto"/>
<circle cx="520.0" cy="628.0" r="3.60" fill="#a4b8f0" shape-rendering="auto"/>
<circle cx="870.0" cy="627.0" r="2.25" fill="#a4b8f0" shape-rendering="auto"/>
<circle cx="27.8" cy="516.6" r="7" fill="#ffffff" shape-rendering="auto"/>
<circle cx="29" cy="538" r="4.5" fill="#20e020" shape-rendering="auto"/>
<circle cx="33" cy="549" r="9" fill="#d8c800" shape-rendering="auto"/>
<circle cx="123.3" cy="595" r="5" fill="#0000f0" shape-rendering="auto"/>
<circle cx="27.8" cy="516.6" r="1" fill="#000"/><circle cx="33" cy="549" r="1" fill="#000"/>
<circle cx="45" cy="505.5" r="4.5" fill="#a4b8f0" stroke="#000" stroke-width="1.2" shape-rendering="auto"/>
<circle cx="141.6" cy="612.4" r="4.5" fill="#a8dcf4" stroke="#000" stroke-width="1.2" shape-rendering="auto"/>
<circle cx="151.7" cy="613" r="3.5" fill="#f8f0a8" stroke="#000" stroke-width="1.2" shape-rendering="auto"/>
<circle cx="58.8" cy="570.6" r="3.5" fill="#f07070" stroke="#000" stroke-width="1.2" shape-rendering="auto"/>
<circle cx="45.8" cy="564" r="2.5" fill="#f4a4a4" stroke="#000" stroke-width="1.2" shape-rendering="auto"/>
<circle cx="82" cy="560" r="3" fill="#f8d0a8" stroke="#000" stroke-width="1.2" shape-rendering="auto"/>
<circle cx="82.8" cy="587.7" r="2.5" fill="#a8dcf4" stroke="#000" stroke-width="1.2" shape-rendering="auto"/>
<circle cx="114.7" cy="603" r="2.5" fill="#a8dcf4" stroke="#000" stroke-width="1.2" shape-rendering="auto"/>
<circle cx="83.8" cy="615.5" r="3.5" fill="#f4a4a4" stroke="#000" stroke-width="1.2" shape-rendering="auto"/>
<circle cx="56" cy="588.6" r="3" fill="#a4b8f0" stroke="#000" stroke-width="1.2" shape-rendering="auto"/>
<circle cx="48" cy="530" r="1.6" fill="#f0b0b0" stroke="#000" stroke-width="1" shape-rendering="auto"/>
<circle cx="55" cy="548" r="1.6" fill="#f0b0b0" stroke="#000" stroke-width="1" shape-rendering="auto"/>
<circle cx="40" cy="575" r="1.6" fill="#f0b0b0" stroke="#000" stroke-width="1" shape-rendering="auto"/>
<circle cx="62" cy="578" r="1.6" fill="#f0b0b0" stroke="#000" stroke-width="1" shape-rendering="auto"/>
<circle cx="100" cy="608" r="1.6" fill="#f0b0b0" stroke="#000" stroke-width="1" shape-rendering="auto"/>
<circle cx="85" cy="597" r="1.6" fill="#f0b0b0" stroke="#000" stroke-width="1" shape-rendering="auto"/>
<circle cx="101" cy="585" r="1.6" fill="#f0b0b0" stroke="#000" stroke-width="1" shape-rendering="auto"/>
<circle cx="75" cy="620" r="1.6" fill="#f0b0b0" stroke="#000" stroke-width="1" shape-rendering="auto"/>
<circle cx="60" cy="610" r="1.6" fill="#f0b0b0" stroke="#000" stroke-width="1" shape-rendering="auto"/>
<circle cx="30" cy="500" r="1.6" fill="#f0b0b0" stroke="#000" stroke-width="1" shape-rendering="auto"/>
<circle cx="24" cy="480" r="1.6" fill="#f0b0b0" stroke="#000" stroke-width="1" shape-rendering="auto"/>
<circle cx="78" cy="558" r="1.6" fill="#f0b0b0" stroke="#000" stroke-width="1" shape-rendering="auto"/>
<circle cx="41" cy="548" r="1.6" fill="#f0b0b0" stroke="#000" stroke-width="1" shape-rendering="auto"/>
<circle cx="950.3" cy="266" r="7" fill="#80801c" shape-rendering="auto"/>
<rect x="917" y="146" width="2" height="2" fill="#e02030"/>
<rect x="922" y="137" width="2" height="2" fill="#b0d0e0"/>
<rect x="917" y="140" width="2" height="2" fill="#f0a0a0"/>
<rect x="916" y="144" width="2" height="2" fill="#f0a0a0"/>
<rect x="909" y="138" width="2" height="2" fill="#f0a0a0"/>
<rect x="914" y="138" width="2" height="2" fill="#c8c8c8"/>
<rect x="921" y="136" width="2" height="2" fill="#c8c8c8"/>
<rect x="915" y="138" width="2" height="2" fill="#b0d0e0"/>
<rect x="926" y="142" width="2" height="2" fill="#e02030"/>
<rect x="907" y="141" width="2" height="2" fill="#f0a0a0"/>
<rect x="907" y="146" width="2" height="2" fill="#f0a0a0"/>
<rect x="919" y="139" width="2" height="2" fill="#e02030"/>
<rect x="919" y="142" width="2" height="2" fill="#c8c8c8"/>
<rect x="916" y="147" width="2" height="2" fill="#e02030"/>
<rect x="906" y="145" width="2" height="2" fill="#b0d0e0"/>
<rect x="911" y="145" width="2" height="2" fill="#b0d0e0"/>
<rect x="917" y="145" width="2" height="2" fill="#c8c8c8"/>
<rect x="914" y="137" width="2" height="2" fill="#e02030"/>
<rect x="929" y="138" width="2" height="2" fill="#b0d0e0"/>
<rect x="923" y="144" width="2" height="2" fill="#b0d0e0"/>
<rect x="916" y="143" width="2" height="2" fill="#f0a0a0"/>
<rect x="925" y="145" width="2" height="2" fill="#f0a0a0"/>
<rect x="917" y="139" width="2" height="2" fill="#f0a0a0"/>
<rect x="924" y="142" width="2" height="2" fill="#c8c8c8"/>
<rect x="910" y="145" width="2" height="2" fill="#b0d0e0"/>
<rect x="894" y="139" width="2" height="2" fill="#e02030"/>
<rect x="919" y="140" width="2" height="2" fill="#b0d0e0"/>
<rect x="920" y="141" width="2" height="2" fill="#f0a0a0"/>
<rect x="915" y="144" width="2" height="2" fill="#c8c8c8"/>
<rect x="921" y="139" width="2" height="2" fill="#e02030"/>
<rect x="928" y="137" width="2" height="2" fill="#f0a0a0"/>
<rect x="907" y="147" width="2" height="2" fill="#f0a0a0"/>
<rect x="911" y="135" width="2" height="2" fill="#b0d0e0"/>
<rect x="929" y="148" width="2" height="2" fill="#b0d0e0"/>
<rect x="915" y="147" width="2" height="2" fill="#c8c8c8"/>
<rect x="922" y="138" width="2" height="2" fill="#e02030"/>
<rect x="909" y="139" width="2" height="2" fill="#c8c8c8"/>
<rect x="914" y="144" width="2" height="2" fill="#b0d0e0"/>
<rect x="915" y="139" width="2" height="2" fill="#e02030"/>
<rect x="907" y="142" width="2" height="2" fill="#e02030"/>
<rect x="912" y="137" width="2" height="2" fill="#f0a0a0"/>
<rect x="918" y="140" width="2" height="2" fill="#c8c8c8"/>
<rect x="920" y="139" width="2" height="2" fill="#f0a0a0"/>
<rect x="914" y="146" width="2" height="2" fill="#c8c8c8"/>
<rect x="913" y="143" width="2" height="2" fill="#e02030"/>
<rect x="919" y="137" width="2" height="2" fill="#f0a0a0"/>
<rect x="925" y="146" width="2" height="2" fill="#b0d0e0"/>
<rect x="915" y="138" width="2" height="2" fill="#b0d0e0"/>
<rect x="918" y="149" width="2" height="2" fill="#c8c8c8"/>
<rect x="912" y="147" width="2" height="2" fill="#c8c8c8"/>
<rect x="920" y="143" width="2" height="2" fill="#e02030"/>
<rect x="914" y="137" width="2" height="2" fill="#c8c8c8"/>
<rect x="925" y="144" width="2" height="2" fill="#c8c8c8"/>
<rect x="921" y="136" width="2" height="2" fill="#c8c8c8"/>
<text x="301" y="362" font-family="Liberation Sans,sans-serif" font-size="7" fill="#808080" shape-rendering="auto">NGC6781</text>
<polyline points="297.0,350.0 304.0,357.0" fill="none" stroke="#808080" stroke-width="1" shape-rendering="auto"/>
<rect x="13" y="136" width="30" height="30" fill="#ece9d8" stroke="#fff" stroke-width="1"/><circle cx="28" cy="151" r="10" fill="#fffff8" shape-rendering="auto"/><path d="M28 141 A10 10 0 0 0 28 161 Z" fill="#808080" shape-rendering="auto"/>
</svg></div>
  <div class="sp" style="left:2px;width:83px;padding-left:1.5px"><span style="letter-spacing:-0.445px;">Zoom=2</span></div>
  <div class="sp" style="left:88px;width:228px;padding-left:2px"><span style="letter-spacing:-0.184px;">Alpha= 17h39m31.396s Delta= +26°55'16.60"</span></div>
  <div class="a" style="left:318px;top:527px;width:41px;height:22px;background:#fff;border:1px solid #7f9db9"><div class="a" style="left:2px;top:2px;width:19px;height:16px;background:#ece9d8"></div><span class="t" style="left:2.5px;top:2px">Eq</span><div class="a" style="left:23px;top:1px;width:15px;height:18px;border-radius:2px;background:linear-gradient(135deg,#cad6fb,#b9c9f7)"><svg class="a" style="left:3px;top:6px" width="9" height="6"><path d="M1 1 L4.500 4.500 L8 1" stroke="#4d6185" stroke-width="2" fill="none"/></svg></div></div>
  <div class="sp" style="left:361px;width:84px;padding-left:4px"><span style="letter-spacing:-0.156px;">Objets: 5142</span></div>
  <div class="sp" style="left:447px;width:40px;padding-left:6px">Her</div>
  <div class="sp" style="left:489px;width:158px;padding-left:5px"><span style="letter-spacing:-0.216px;">Champ=00°00'00"x00°00'00"</span></div>
  <div class="sp" style="left:649px;width:84px;padding-left:6px;color:#e00000"><span style="letter-spacing:0.125px;">Az fZ Tpc</span></div>
 </div>
</div>
<div class="a" id="dlg">
<div class="a" id="dlgt"><span class="tt" id="dt" style="letter-spacing:-0.062px;left:7.5px;top:8px;color:#fff;text-shadow:1px 1px 0 #0a2a8a">Configuration du télescope et de ses périphériques</span>
<div class="a" style="left:563px;top:5px;width:21px;height:21px;border-radius:3px;border:1px solid #fff;background:linear-gradient(135deg,#e9866a,#d8492a 45%,#c03512)"><svg class="a" style="left:0;top:0" width="19" height="19"><path d="M5 5 L14 14 M14 5 L5 14" stroke="#fff" stroke-width="2.3"/></svg></div></div>
<div class="a" id="dlgc"></div>
<div class="a" style="left:6px;top:46px;width:201px;height:329px;background:#fff;border:1px solid #7f9db9"></div>
<span class="tr" style="letter-spacing:-0.061px;left:32.5px;top:48.5px">Telescope</span>
<span class="tr" style="letter-spacing:-0.162px;left:51.5px;top:64.5px">Motorisation/Pointage</span>
<span class="tr" style="letter-spacing:-0.159px;left:70px;top:80.5px">Modèle de Pointage</span>
<span class="tr" style="letter-spacing:-0.270px;left:70px;top:96.5px">Limites de Pointage</span>
<span class="tr" style="letter-spacing:-0.085px;left:70px;top:112.5px">Axes RA/DEC guidage fin</span>
<span class="tr" style="letter-spacing:-0.309px;left:51.5px;top:128.5px">Focalisation</span>
<span class="tr" style="letter-spacing:-0.243px;left:51.5px;top:144.5px">Focalisation secondaire</span>
<span class="tr" style="letter-spacing:-0.272px;left:51.5px;top:160.5px">Roue à filtres</span>
<span class="tr" style="letter-spacing:-0.247px;left:51.5px;top:176.5px">Dome/Abris</span>
<span class="tr" style="letter-spacing:-1.078px;left:51.5px;top:192.5px">GPS</span>
<span class="tr" style="letter-spacing:-0.235px;left:51.5px;top:208.5px">Localisation Géographique</span>
<span class="tr" style="letter-spacing:-0.221px;left:51.5px;top:224.5px">Station Méteo</span>
<span class="tr" style="letter-spacing:-0.226px;left:51.5px;top:240.5px">Moniteur de Nuages</span>
<span class="tr" style="letter-spacing:-0.304px;left:51.5px;top:256.5px">Dérotateur de Champ</span>
<div class="dv" style="left:39px;top:78px;height:187px"></div>
<div class="dv" style="left:58px;top:80px;height:41px"></div>
<div class="dh" style="left:45px;top:72px;width:4px"></div>
<div class="dh" style="left:59px;top:88px;width:9px"></div>
<div class="dh" style="left:59px;top:104px;width:9px"></div>
<div class="dh" style="left:59px;top:120px;width:9px"></div>
<div class="dh" style="left:40px;top:136px;width:9px"></div>
<div class="dh" style="left:40px;top:152px;width:9px"></div>
<div class="dh" style="left:40px;top:168px;width:9px"></div>
<div class="dh" style="left:40px;top:184px;width:9px"></div>
<div class="dh" style="left:40px;top:200px;width:9px"></div>
<div class="dh" style="left:40px;top:216px;width:9px"></div>
<div class="dh" style="left:40px;top:232px;width:9px"></div>
<div class="dh" style="left:40px;top:248px;width:9px"></div>
<div class="dh" style="left:40px;top:264px;width:9px"></div>
<div class="tbx" style="left:16px;top:52px"></div>
<div class="tbx" style="left:35px;top:68px"></div>
<div class="btn" style="left:29px;top:382px;width:72px;height:57px;line-height:57px"><span style="letter-spacing:-0.703px;">OK</span></div>
<div class="btn" style="left:110px;top:382px;width:73px;height:57px;line-height:57px"><span style="letter-spacing:-0.203px;">Annuler</span></div>
<div class="btn" style="left:7px;top:446px;width:27px;height:23px"><svg class="a" style="left:4px;top:3px" width="18" height="16" viewBox="0 0 18 16"><path d="M1 5 L1 14 L12 14 L12 6 L6 6 L5 5 Z" fill="#8a8a20" stroke="#000" stroke-width="1"/><path d="M1 14 L4 8 L16 8 L12 14 Z" fill="#d8d060" stroke="#000" stroke-width="1"/><path d="M9 3 Q12 0.5 15 3 L15 1 M15 3 L13 3.5" stroke="#000" fill="none" stroke-width="1"/></svg></div>
<div class="btn" style="left:41px;top:446px;width:27px;height:23px"><svg class="a" style="left:5px;top:3px" width="16" height="16" viewBox="0 0 16 16"><rect x="1" y="1" width="14" height="14" fill="#7a7a20" stroke="#000"/><rect x="4" y="1.5" width="8" height="5" fill="#e8e8e8" stroke="#000" stroke-width=".6"/><rect x="4" y="9" width="8" height="6" fill="#222"/><rect x="9" y="10" width="2" height="4" fill="#ddd"/></svg></div>
<div class="a" style="left:210px;top:49px;width:374px;height:418px;background:#fbfbf9;border:1px solid #919b9c;box-shadow:1px 1px 0 #d0cec0"></div>
<div class="a" style="left:210px;top:29px;width:80px;height:21px;background:#fcfcfa;border:1px solid #919b9c;border-bottom:none;border-radius:3px 3px 0 0;overflow:hidden"><div class="a" style="left:-1px;top:-1px;width:80px;height:3px;background:linear-gradient(#e68b2c,#ffc73c);border-radius:3px 3px 0 0"></div><span class="t" style="letter-spacing:-0.249px;left:7px;top:2px">Roue a Filtres</span></div>
<div class="a" style="left:216px;top:62px;width:363px;height:70px;border:1px solid #d0d0bf;border-radius:4px"></div>
<span class="t" style="letter-spacing:-0.183px;left:223px;top:55px;background:#fbfbf9;padding:0 2px;color:#0046d5">Type de roue a filtre</span>
<div class="rad" style="left:224px;top:72px"></div>
<span class="t" style="letter-spacing:-0.002px;left:240px;top:71px">Aucune</span>
<div class="rad" style="left:224px;top:92px"></div>
<span class="t" style="letter-spacing:-0.210px;left:240px;top:91px">Roue à filtre dans Plugins (DLLs)</span>
<div class="rad" style="left:224px;top:112px"><i class="a" style="left:3px;top:3px;width:5px;height:5px;border-radius:50%;background:radial-gradient(circle at 35% 35%,#7fd96e,#21a121)"></i></div>
<span class="t" style="letter-spacing:-0.313px;left:240px;top:111px">Roue à Filtres ASCOM</span>
<div class="rad" style="left:401px;top:72px"></div>
<span class="t" style="letter-spacing:-0.286px;left:417px;top:71px">Roue à Filtres CFW10 SBIG</span>
<div class="rad" style="left:401px;top:92px"></div>
<span class="t" style="letter-spacing:-0.260px;left:417px;top:91px">Roues à Filtres FLI (toutes)</span>
<div class="a" style="left:216px;top:159px;width:361px;height:302px;background:linear-gradient(#fcfcfa,#f4f3ee);border:1px solid #919b9c;box-shadow:1px 1px 0 #d0cec0"></div>
<div class="a" style="left:335px;top:139px;width:242px;height:20px;background:#ece9d8"></div>
<div class="a" style="left:216px;top:139px;width:119px;height:21px;background:#fcfcfa;border:1px solid #919b9c;border-bottom:none;border-radius:3px 3px 0 0;overflow:hidden"><div class="a" style="left:-1px;top:-1px;width:119px;height:3px;background:linear-gradient(#e68b2c,#ffc73c);border-radius:3px 3px 0 0"></div><span class="t" style="letter-spacing:-0.354px;left:8px;top:2px">Configuration ASCOM</span></div>
<div class="btn" style="left:225px;top:168px;width:143px;height:23px;line-height:22px;box-shadow:inset 0 0 0 2px #a8c0f0;border-color:#003c74"><span style="letter-spacing:-0.281px;">Choisir le type de roue</span></div>
<span class="t" style="letter-spacing:-0.995px;left:373px;top:175px">Type :</span>
<span class="t" style="letter-spacing:-0.210px;left:407.5px;top:175px">ASCOM.Atik.FilterWheel</span>
<div class="btn" style="left:225px;top:200px;width:80px;height:23px;line-height:22px;border-color:#c9c7ba;background:#f5f4ea;color:#aca899"><span style="letter-spacing:-0.264px;">Configuration</span></div>
<span class="t" style="letter-spacing:-0.231px;left:312px;top:204px">NB: Les offsets de focusers sont exprimés en microns</span>
<span class="t" style="letter-spacing:-0.186px;left:226px;top:234.5px">Index du filtre de référence pour la focalisation de ref.</span>
<div class="a" style="left:495px;top:232px;width:58px;height:21px;background:#fff;border:1px solid #7f9db9"><span class="t" style="left:2px;top:2px">1</span></div>
<span class="t" style="letter-spacing:-0.228px;left:227.5px;top:262px">Position de la focalisation du filtre de référence en mm</span>
<span class="t" style="letter-spacing:-0.225px;left:227.5px;top:277px">(si le focuser est actif, à l'init de la roue à filtre, la mise</span>
<span class="t" style="letter-spacing:-0.148px;left:227.5px;top:289.5px">au point est effectuée sur cette valeur)</span>
<div class="a" style="left:495px;top:259px;width:58px;height:21px;background:#fff;border:1px solid #7f9db9"><span class="t" style="letter-spacing:-0.306px;left:2px;top:2px">1.250</span></div>
<svg class="a" style="left:226px;top:384px" width="47" height="55" viewBox="0 0 47 55"><defs><radialGradient id="gl"><stop offset="0" stop-color="#fff"/><stop offset=".45" stop-color="#fff" stop-opacity=".9"/><stop offset="1" stop-color="#fff" stop-opacity="0"/></radialGradient></defs><rect width="47" height="55" fill="#0c2461"/><path d="M22 7 L10 33 L38 19 M22 7 L32 35" stroke="#e8e030" stroke-width="1.2" fill="none"/><circle cx="22" cy="7" r="4" fill="url(#gl)"/><circle cx="10" cy="33" r="4.5" fill="url(#gl)"/><circle cx="38" cy="19" r="4" fill="url(#gl)"/><circle cx="32" cy="35" r="4.5" fill="url(#gl)"/><text x="23.5" y="51.8" font-family="Liberation Sans,sans-serif" font-weight="bold" font-size="10.8" fill="#fff" text-anchor="middle">ASCOM</text></svg>
</div>
<div class="a" style="left:0;top:741px;width:1280px;height:1px;background:#fff"></div><div class="a" style="left:0;top:742px;width:1280px;height:1px;background:#9d9a88"></div>
<div class="a" id="sb"><div class="a" style="left:397px;top:1px;width:1px;height:24px;background:#c5c2b2"></div><div class="a" style="left:398px;top:1px;width:1px;height:24px;background:#fff"></div><div class="a" style="left:1277px;top:1px;width:1px;height:24px;background:#c5c2b2"></div></div>
<div class="a" id="tk">
 <div class="a" id="st">
  <svg class="a" style="left:10px;top:5px" width="21" height="20" viewBox="0 0 19 17"><path d="M2 3 Q5 1 9 3 L8 8 Q5 6.5 1 8 Z" fill="#e8502a"/><path d="M10.5 3.3 Q14 5 18 3 L17 8 Q13.5 10 9.5 8.2 Z" fill="#7cc242"/><path d="M0.8 9.3 Q4 7.8 7.8 9.5 L6.8 14.5 Q3.5 13 0 14.5 Z" fill="#3a7be0"/><path d="M9.2 9.7 Q13 11.5 16.8 9.5 L15.8 14.5 Q12 16.5 8.2 14.8 Z" fill="#f5c028"/></svg>
  <span class="a" style="letter-spacing:-0.799px;left:35.5px;top:4px;font:italic bold 19px/22px 'Liberation Sans',sans-serif;color:#fff;text-shadow:1px 1px 1px #1a4a1a">démarrer</span>
 </div>
 <svg class="a" style="left:148px;top:6px" width="16" height="16" viewBox="0 0 16 16"><path d="M2 3 Q2 1.500 4 1.500 L11 1.500 L12 4 L12 12 Q12 14 10 14 L4 14 Q2 14 2 12Z" fill="#f4f8ff" stroke="#3a6ad8" stroke-width="1.200"/><path d="M4.500 5.500 Q7 3.500 9 5.500 M4.500 8 Q5 11 9 10.500" stroke="#2a5ac8" fill="none" stroke-width="1.500"/><path d="M8 9 L13.500 3.500 L15 5 L9.500 10.500 L7.500 11Z" fill="#f0d8a0" stroke="#805020" stroke-width=".6"/><path d="M13 3 l1.500 -1 l1.500 1.500 l-1 1.500z" fill="#e04040"/></svg>
 <svg class="a" style="left:171px;top:6px" width="17" height="17" viewBox="0 0 17 17"><circle cx="9" cy="8" r="5.500" fill="#3b5bb8"/><circle cx="10.500" cy="6" r="2" fill="#9ab8f0"/><path d="M2.500 3 Q1 6 1.500 10 Q3 16 9 16.300 Q14.500 16 16 10.500 Q16.500 7 15 4.500 Q15.500 9 12.500 11.500 Q9 13.500 6.500 11 Q5 9 6.500 7 L4.500 6.500 Q4 4.500 5 3 Q3.500 3.500 3 5 Q2.500 4 2.500 3Z" fill="#f08418" stroke="#c85808" stroke-width=".5"/></svg>
 <svg class="a" style="left:194px;top:7px" width="15" height="15" viewBox="0 0 15 15"><path d="M1.500 7 Q1.500 2 7 1.500 Q12.500 1.500 13.500 6.500 Q14 11 10 13 Q5 14.500 2 11.500 Q3.500 12 4.500 11 Q1.500 9.500 1.500 7Z" fill="#1c4a98" stroke="#123070" stroke-width=".5"/><path d="M4 6.500 Q5 3.500 8.500 4 Q11 4.500 11.500 7 Q12 10 9 11 Q6 11.500 4.500 10 L6.500 9.500 Q4.500 8.500 4 6.500Z" fill="#f0f0f0"/><path d="M5 5.500 l3.500 2.500 l3 -2" stroke="#b0b8c8" fill="none" stroke-width=".8"/></svg>
 <div class="a" style="left:217px;top:7px;width:16px;height:16px;background:linear-gradient(#e85848,#d83828);border:1px solid #fff;border-radius:2px"><i class="a" style="left:2.500px;top:2.500px;width:9px;height:9px;border:1.600px solid #fff;border-radius:50%"></i><i class="a" style="left:6px;top:4.500px;width:2px;height:5px;background:#fff"></i></div>
 <svg class="a" style="left:258px;top:7px" width="8" height="6"><path d="M.5 .5L3 2.800L.5 5M4.500 .5L7 2.800L4.500 5" stroke="#c4d8fc" stroke-width="1.300" fill="none"/></svg>
 <div class="tkb" style="left:274px;width:158px;background:linear-gradient(#4a8cf5,#3b7bee 20%,#3674e8 80%,#2a62d8);box-shadow:inset 0 0 0 1px rgba(255,255,255,.12)">
   <svg class="a" style="left:8px;top:3px" width="17" height="17" viewBox="0 0 17 17"><circle cx="9" cy="8" r="5.500" fill="#3b5bb8"/><circle cx="10.500" cy="6" r="2" fill="#9ab8f0"/><path d="M2.500 3 Q1 6 1.500 10 Q3 16 9 16.300 Q14.500 16 16 10.500 Q16.500 7 15 4.500 Q15.500 9 12.500 11.500 Q9 13.500 6.500 11 Q5 9 6.500 7 L4.500 6.500 Q4 4.500 5 3 Q3.500 3.500 3 5 Q2.500 4 2.500 3Z" fill="#f08418" stroke="#c85808" stroke-width=".5"/></svg>
   <span class="a" style="letter-spacing:-0.487px;left:28.5px;top:5px">FORUM DU LOGICIEL...</span></div>
 <div class="tkb" style="left:434px;width:159px;background:#1e52b7;box-shadow:inset 1px 1px 2px rgba(0,0,40,.5)">
   <svg class="a" style="left:10px;top:3px" width="18" height="18" viewBox="0 0 18 18"><path d="M9 1 L17.5 17 L1 17 Z" fill="#111"/><path d="M8.3 2.5 L14.5 16 L2 16 Z" fill="url(#pg)"/></svg>
   <span class="a" style="letter-spacing:-1.047px;left:29.5px;top:5px">PRiSM</span></div>
 <span class="a" style="letter-spacing:-0.247px;left:844.4px;top:8px;color:#b3cdf8;line-height:14px">Bureau</span><svg class="a" style="left:886px;top:7px" width="8" height="6"><path d="M.5 .5L3 2.800L.5 5M4.500 .5L7 2.800L4.500 5" stroke="#c4d8fc" stroke-width="1.300" fill="none"/></svg>
 <span class="a" style="letter-spacing:-0.129px;left:905.5px;top:8px;color:#b3cdf8;line-height:14px">Ma barre</span><svg class="a" style="left:956px;top:7px" width="8" height="6"><path d="M.5 .5L3 2.800L.5 5M4.500 .5L7 2.800L4.500 5" stroke="#c4d8fc" stroke-width="1.300" fill="none"/></svg>
 <span class="a" style="letter-spacing:-0.003px;left:975.2px;top:8px;color:#b3cdf8;line-height:14px">Barre Astro</span><svg class="a" style="left:1038px;top:7px" width="8" height="6"><path d="M.5 .5L3 2.800L.5 5M4.500 .5L7 2.800L4.500 5" stroke="#c4d8fc" stroke-width="1.300" fill="none"/></svg>
 <div class="a" id="tray">
  <svg class="a" style="left:0;top:0" width="218" height="30" viewBox="1062 770 218 30">
   <rect x="1072" y="777.500" width="15" height="14.500" rx="3" fill="#eef6ff"/><path d="M1076 781 q2 -2 3.500 0 q0 2 -2 2.500 q-2 0 -1.500 -2.500z M1080 785 q2.500 -1.500 3.500 1 q0 2.500 -2.500 2.500 q-2 -.5 -1 -3.500z" fill="none" stroke="#2060c0" stroke-width="1.200"/><path d="M1075 790 q-1 -4 1 -6" stroke="#60a0e0" fill="none"/>
   <rect x="1094.500" y="777.500" width="8" height="7" fill="#5060b0" stroke="#c8d0f0" stroke-width=".8"/><rect x="1090.500" y="781.500" width="8" height="7" fill="#4858a8" stroke="#d8e0f8" stroke-width=".8"/><path d="M1092 791h6M1097 787h5" stroke="#d0d8f0" stroke-width="1.200"/>
   <circle cx="1114.500" cy="783.500" r="5.500" fill="#707478"/><circle cx="1113.500" cy="782.500" r="2.500" fill="#b0b4b8"/><circle cx="1114" cy="783" r="1.200" fill="#603030"/><path d="M1117 791 q4 -1 6 -5" stroke="#80b0f0" fill="none" stroke-width="1.200"/>
   <path d="M1128 788 q-1 -5 4 -7 q5 -2 7.500 1 q2.500 4 -2 7 q-5 2.500 -8 1z" fill="#f8f8f8" stroke="#909090" stroke-width=".6"/><path d="M1134 781 l3 4" stroke="#d04040" stroke-width=".8"/><path d="M1137 780 q2 -2 4 -1.500" stroke="#f0f0f0" fill="none"/>
   <rect x="1146" y="781.500" width="12.500" height="9" fill="#f4e4a0" stroke="#b09030" stroke-width=".8"/><path d="M1146 781.500 l6.200 5 l6.300 -5" stroke="#b09030" fill="none" stroke-width=".8"/><path d="M1154 787 l5 5 M1159 787 l-5 5" stroke="#e01010" stroke-width="1.800"/>
   <circle cx="1170" cy="785" r="8" fill="#f07818"/><circle cx="1170" cy="785" r="8" fill="none" stroke="#f8a858" stroke-width="1"/><path d="M1166 787 A4.200 4.200 0 1 1 1173 788.500" stroke="#fff" stroke-width="2.600" fill="none"/>
   <path d="M1182 779 h4 l1 1.500 h5.500 v11 h-10.500z" fill="#f0c030" stroke="#a07818" stroke-width=".8"/><circle cx="1190" cy="787.500" r="3" fill="#e8e8f8" stroke="#606080" stroke-width=".8"/><circle cx="1190" cy="787.500" r="1" fill="#4040a0"/>
   <path d="M1200 786 l8 -2 l4 4 l-8 3z" fill="#909aa8" stroke="#505868" stroke-width=".8"/><path d="M1202 778.500 h5 v3 h2.500 l-5 4.500 l-5 -4.500 h2.500z" fill="#30b040" stroke="#187028" stroke-width=".6" transform="rotate(-20 1204 782)"/>
   <path d="M1217 778.500 q0 8 5 10 q4 1 8 1" stroke="#f4f4f4" stroke-width="2" fill="none"/><rect x="1226" y="788" width="5.500" height="4" rx="1" fill="#d8d020" stroke="#808010" stroke-width=".6"/>
  </svg>
  <span class="a" style="letter-spacing:0.056px;left:176.5px;top:8px;color:#fff;line-height:14px">11:53</span>
 </div>
</div>
</body></html>
